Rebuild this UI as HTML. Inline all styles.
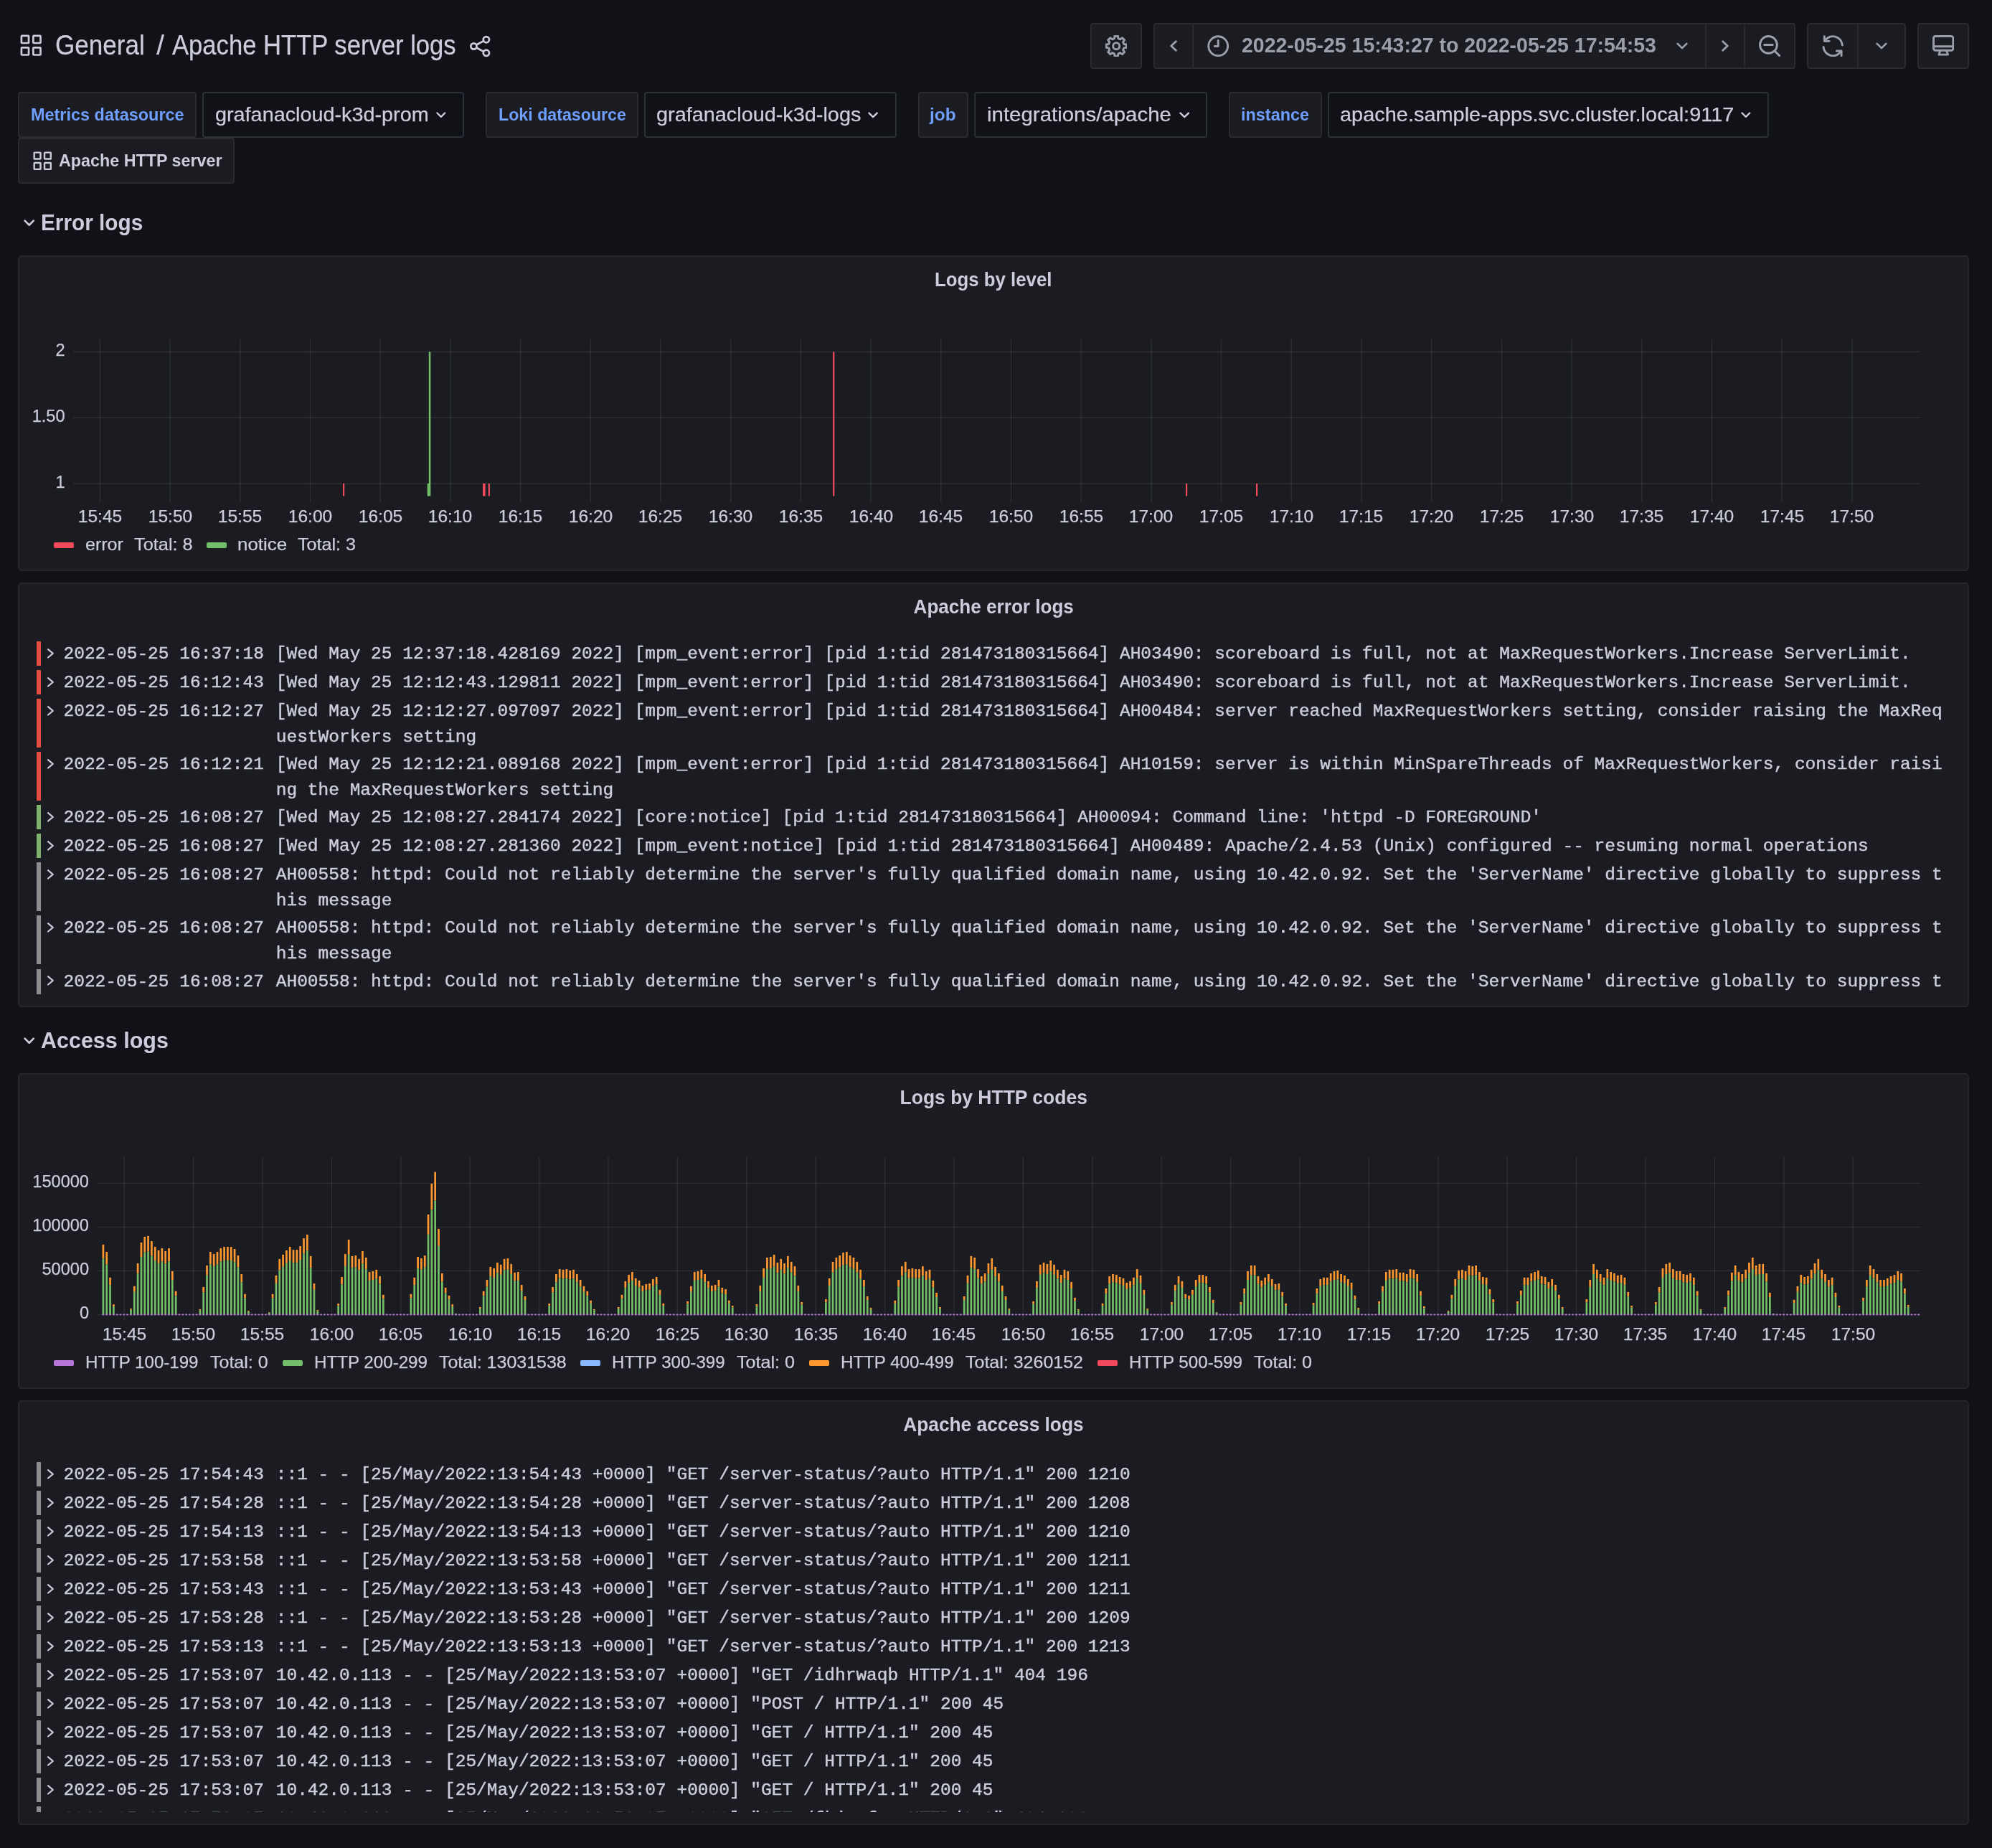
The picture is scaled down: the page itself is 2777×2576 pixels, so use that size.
<!DOCTYPE html>
<html lang="en"><head><meta charset="utf-8"><title>Apache HTTP server logs - Grafana</title>
<style>
html,body{margin:0;padding:0}
body{width:2777px;height:2576px;background:#111217;position:relative;overflow:hidden;font-family:"Liberation Sans", sans-serif;color:rgb(204,204,220)}
#root{position:absolute;left:0;top:0;width:2777px;height:2576px;will-change:transform}
.t{position:absolute;white-space:pre;margin:0;padding:0;-webkit-text-stroke:0.25px currentColor}
.m{font-family:"Liberation Mono", monospace;-webkit-text-stroke:0.45px currentColor}
.b{position:absolute;box-sizing:border-box;display:block}
.clip{position:absolute;left:0;width:2777px;overflow:hidden}
</style></head>
<body>
<div id="root">
<svg class="b" style="left:27.70px;top:48.20px;" width="30.40" height="30.40" viewBox="0 0 24 24"><g fill="none" stroke="rgb(204,204,220)" stroke-width="2.1" stroke-linejoin="miter"><rect x="1.5" y="1.5" width="8" height="8" rx="0.6"/><rect x="1.5" y="14.5" width="8" height="8" rx="0.6"/><rect x="14.5" y="1.5" width="8" height="8" rx="0.6"/><rect x="14.5" y="14.5" width="8" height="8" rx="0.6"/></g></svg>
<span class="t" style="top:43.96px;font-size:38.20px;line-height:38.20px;color:rgb(204,204,220);left:76.77px;transform:scaleX(0.9182);transform-origin:0 50%;">General</span>
<span class="t" style="top:43.96px;font-size:38.20px;line-height:38.20px;color:rgb(204,204,220);left:218.30px;">/</span>
<span class="t" style="top:43.96px;font-size:38.20px;line-height:38.20px;color:rgb(204,204,220);left:240.07px;transform:scaleX(0.9064);transform-origin:0 50%;">Apache HTTP server logs</span>
<svg class="b" style="left:653.50px;top:48.60px;" width="31.00" height="31.00" viewBox="0 0 24 24"><g fill="none" stroke="rgb(204,204,220)" stroke-width="2.1" stroke-linecap="round" stroke-linejoin="round"><circle cx="18.5" cy="4.8" r="3.2"/><circle cx="5" cy="12" r="3.2"/><circle cx="18.5" cy="19.2" r="3.2"/><path d="M7.9 10.5 L15.6 6.3 M7.9 13.5 L15.6 17.7"/></g></svg>
<div class="b" style="left:1520.00px;top:32.00px;width:72.00px;height:64.00px;background:#1a1c21;border-radius:4px;border:2px solid #292b31;"></div>
<svg class="b" style="left:1540.70px;top:48.90px;" width="30.40" height="30.40" viewBox="0 0 24 24"><g fill="none" stroke="rgb(157,158,171)" stroke-width="2.3" stroke-linecap="round" stroke-linejoin="round"><path d="M10.25 0.94 L13.75 0.94 L14.14 3.67 L16.38 4.60 L18.58 2.94 L21.06 5.42 L19.40 7.62 L20.33 9.86 L23.06 10.25 L23.06 13.75 L20.33 14.14 L19.40 16.38 L21.06 18.58 L18.58 21.06 L16.38 19.40 L14.14 20.33 L13.75 23.06 L10.25 23.06 L9.86 20.33 L7.62 19.40 L5.42 21.06 L2.94 18.58 L4.60 16.38 L3.67 14.14 L0.94 13.75 L0.94 10.25 L3.67 9.86 L4.60 7.62 L2.94 5.42 L5.42 2.94 L7.62 4.60 L9.86 3.67 Z"/><circle cx="12" cy="12" r="3.6"/></g></svg>
<div class="b" style="left:1608.00px;top:32.00px;width:895.00px;height:64.00px;background:#1a1c21;border-radius:4px;border:2px solid #292b31;"></div>
<div class="b" style="left:1662.00px;top:34.00px;width:2.00px;height:60.00px;background:#292b31;border-radius:0px;"></div>
<div class="b" style="left:2377.00px;top:34.00px;width:2.00px;height:60.00px;background:#292b31;border-radius:0px;"></div>
<div class="b" style="left:2431.00px;top:34.00px;width:2.00px;height:60.00px;background:#292b31;border-radius:0px;"></div>
<svg class="b" style="left:1630.00px;top:55.00px;" width="12.00" height="18.00" viewBox="0 0 9 16"><g fill="none" stroke="rgb(157,158,171)" stroke-width="2.6" stroke-linecap="round" stroke-linejoin="round"><path d="M7.5 2.4 L1.6 8 L7.5 13.6"/></g></svg>
<svg class="b" style="left:1682.80px;top:48.80px;" width="30.40" height="30.40" viewBox="0 0 24 24"><g fill="none" stroke="rgb(157,158,171)" stroke-width="2.3" stroke-linecap="round" stroke-linejoin="round"><circle cx="12" cy="12" r="10.6"/><path d="M12 5.8 V12.2 H8.2"/></g></svg>
<span class="t" style="top:48.20px;font-size:30.00px;line-height:30.00px;color:rgb(157,158,171);font-weight:700;-webkit-text-stroke:0;left:1730.80px;transform:scaleX(0.9492);transform-origin:0 50%;">2022-05-25 15:43:27 to 2022-05-25 17:54:53</span>
<svg class="b" style="left:2337.00px;top:59.20px;" width="16.00" height="10.00" viewBox="0 0 14 8.5"><g fill="none" stroke="rgb(157,158,171)" stroke-width="2.4" stroke-linecap="round" stroke-linejoin="round"><path d="M1.5 1.5 L7 7 L12.5 1.5"/></g></svg>
<svg class="b" style="left:2399.30px;top:55.00px;" width="12.00" height="18.00" viewBox="0 0 9 16"><g fill="none" stroke="rgb(157,158,171)" stroke-width="2.6" stroke-linecap="round" stroke-linejoin="round"><path d="M1.5 2.4 L7.4 8 L1.5 13.6"/></g></svg>
<svg class="b" style="left:2451.80px;top:48.60px;" width="30.40" height="30.40" viewBox="0 0 24 24"><g fill="none" stroke="rgb(157,158,171)" stroke-width="2.3" stroke-linecap="round" stroke-linejoin="round"><circle cx="10.6" cy="10.6" r="9.4"/><path d="M6 10.6 H15.2 M17.6 17.6 L22.6 22.6"/></g></svg>
<div class="b" style="left:2519.00px;top:32.00px;width:138.00px;height:64.00px;background:#1a1c21;border-radius:4px;border:2px solid #292b31;"></div>
<div class="b" style="left:2589.00px;top:34.00px;width:2.00px;height:60.00px;background:#292b31;border-radius:0px;"></div>
<svg class="b" style="left:2539.80px;top:48.80px;" width="30.40" height="30.40" viewBox="0 0 24 24"><g fill="none" stroke="rgb(157,158,171)" stroke-width="2.3" stroke-linecap="round" stroke-linejoin="round"><path d="M2.6 1.4 V6.6 H8"/><path d="M3.2 6.2 A10.4 10.4 0 0 1 22.4 11"/><path d="M21.4 22.6 V17.4 H16"/><path d="M20.8 17.8 A10.4 10.4 0 0 1 1.6 13"/></g></svg>
<svg class="b" style="left:2615.30px;top:59.20px;" width="16.00" height="10.00" viewBox="0 0 14 8.5"><g fill="none" stroke="rgb(157,158,171)" stroke-width="2.4" stroke-linecap="round" stroke-linejoin="round"><path d="M1.5 1.5 L7 7 L12.5 1.5"/></g></svg>
<div class="b" style="left:2673.00px;top:32.00px;width:72.00px;height:64.00px;background:#1a1c21;border-radius:4px;border:2px solid #292b31;"></div>
<svg class="b" style="left:2693.80px;top:48.80px;" width="30.40" height="30.40" viewBox="0 0 24 24"><g fill="none" stroke="rgb(157,158,171)" stroke-width="2.3" stroke-linecap="round" stroke-linejoin="round"><rect x="1.2" y="1.2" width="21.6" height="15.6" rx="2.2"/><path d="M1.2 12.4 H22.8"/><path d="M8.6 17 L7 21.4 H17 L15.4 17"/></g></svg>
<div class="b" style="left:25.00px;top:128.00px;width:249.00px;height:64.00px;background:#1a1c21;border-radius:4px;border:2px solid #292b31;"></div>
<span class="t" style="top:148.62px;font-size:23.60px;line-height:23.60px;color:#6e9fff;font-weight:700;-webkit-text-stroke:0;left:42.86px;transform:scaleX(0.9932);transform-origin:0 50%;">Metrics datasource</span>
<div class="b" style="left:282.00px;top:128.00px;width:365.00px;height:64.00px;background:#111217;border-radius:4px;border:2px solid #2e3038;"></div>
<span class="t" style="top:146.01px;font-size:27.40px;line-height:27.40px;color:rgb(204,204,220);left:299.50px;transform:scaleX(1.0513);transform-origin:0 50%;">grafanacloud-k3d-prom</span>
<svg class="b" style="left:608.40px;top:156.00px;" width="13.70" height="8.32" viewBox="0 0 14 8.5"><g fill="none" stroke="rgb(204,204,220)" stroke-width="2.4" stroke-linecap="round" stroke-linejoin="round"><path d="M1.5 1.5 L7 7 L12.5 1.5"/></g></svg>
<div class="b" style="left:677.00px;top:128.00px;width:213.00px;height:64.00px;background:#1a1c21;border-radius:4px;border:2px solid #292b31;"></div>
<span class="t" style="top:148.62px;font-size:23.60px;line-height:23.60px;color:#6e9fff;font-weight:700;-webkit-text-stroke:0;left:694.56px;transform:scaleX(0.9832);transform-origin:0 50%;">Loki datasource</span>
<div class="b" style="left:898.00px;top:128.00px;width:352.00px;height:64.00px;background:#111217;border-radius:4px;border:2px solid #2e3038;"></div>
<span class="t" style="top:146.01px;font-size:27.40px;line-height:27.40px;color:rgb(204,204,220);left:914.90px;transform:scaleX(1.0528);transform-origin:0 50%;">grafanacloud-k3d-logs</span>
<svg class="b" style="left:1210.40px;top:156.00px;" width="14.20" height="8.62" viewBox="0 0 14 8.5"><g fill="none" stroke="rgb(204,204,220)" stroke-width="2.4" stroke-linecap="round" stroke-linejoin="round"><path d="M1.5 1.5 L7 7 L12.5 1.5"/></g></svg>
<div class="b" style="left:1280.00px;top:128.00px;width:70.00px;height:64.00px;background:#1a1c21;border-radius:4px;border:2px solid #292b31;"></div>
<span class="t" style="top:148.62px;font-size:23.60px;line-height:23.60px;color:#6e9fff;font-weight:700;-webkit-text-stroke:0;left:1296.06px;transform:scaleX(1.0343);transform-origin:0 50%;">job</span>
<div class="b" style="left:1358.00px;top:128.00px;width:325.00px;height:64.00px;background:#111217;border-radius:4px;border:2px solid #2e3038;"></div>
<span class="t" style="top:146.01px;font-size:27.40px;line-height:27.40px;color:rgb(204,204,220);left:1375.90px;transform:scaleX(1.0746);transform-origin:0 50%;">integrations/apache</span>
<svg class="b" style="left:1643.90px;top:156.00px;" width="14.50" height="8.80" viewBox="0 0 14 8.5"><g fill="none" stroke="rgb(204,204,220)" stroke-width="2.4" stroke-linecap="round" stroke-linejoin="round"><path d="M1.5 1.5 L7 7 L12.5 1.5"/></g></svg>
<div class="b" style="left:1713.00px;top:128.00px;width:130.00px;height:64.00px;background:#1a1c21;border-radius:4px;border:2px solid #292b31;"></div>
<span class="t" style="top:148.62px;font-size:23.60px;line-height:23.60px;color:#6e9fff;font-weight:700;-webkit-text-stroke:0;left:1730.06px;transform:scaleX(0.9924);transform-origin:0 50%;">instance</span>
<div class="b" style="left:1851.00px;top:128.00px;width:615.00px;height:64.00px;background:#111217;border-radius:4px;border:2px solid #2e3038;"></div>
<span class="t" style="top:146.01px;font-size:27.40px;line-height:27.40px;color:rgb(204,204,220);left:1867.60px;transform:scaleX(1.0560);transform-origin:0 50%;">apache.sample-apps.svc.cluster.local:9117</span>
<svg class="b" style="left:2427.10px;top:156.00px;" width="13.70" height="8.32" viewBox="0 0 14 8.5"><g fill="none" stroke="rgb(204,204,220)" stroke-width="2.4" stroke-linecap="round" stroke-linejoin="round"><path d="M1.5 1.5 L7 7 L12.5 1.5"/></g></svg>
<div class="b" style="left:25.00px;top:192.00px;width:302.00px;height:64.00px;background:#1a1c21;border-radius:4px;border:2px solid #292b31;"></div>
<svg class="b" style="left:45.80px;top:210.70px;" width="26.50" height="26.50" viewBox="0 0 24 24"><g fill="none" stroke="rgb(204,204,220)" stroke-width="2.2" stroke-linejoin="miter"><rect x="1.5" y="1.5" width="8" height="8" rx="0.6"/><rect x="1.5" y="14.5" width="8" height="8" rx="0.6"/><rect x="14.5" y="1.5" width="8" height="8" rx="0.6"/><rect x="14.5" y="14.5" width="8" height="8" rx="0.6"/></g></svg>
<span class="t" style="top:212.82px;font-size:23.60px;line-height:23.60px;color:rgb(204,204,220);font-weight:700;-webkit-text-stroke:0;left:82.36px;transform:scaleX(0.9875);transform-origin:0 50%;">Apache HTTP server</span>
<svg class="b" style="left:33.10px;top:306.20px;" width="15.40" height="9.35" viewBox="0 0 14 8.5"><g fill="none" stroke="rgb(204,204,220)" stroke-width="2.4" stroke-linecap="round" stroke-linejoin="round"><path d="M1.5 1.5 L7 7 L12.5 1.5"/></g></svg>
<span class="t" style="top:294.95px;font-size:31.60px;line-height:31.60px;color:rgb(204,204,220);font-weight:700;-webkit-text-stroke:0;left:56.94px;transform:scaleX(0.9424);transform-origin:0 50%;">Error logs</span>
<svg class="b" style="left:33.10px;top:1446.40px;" width="15.40" height="9.35" viewBox="0 0 14 8.5"><g fill="none" stroke="rgb(204,204,220)" stroke-width="2.4" stroke-linecap="round" stroke-linejoin="round"><path d="M1.5 1.5 L7 7 L12.5 1.5"/></g></svg>
<span class="t" style="top:1435.15px;font-size:31.60px;line-height:31.60px;color:rgb(204,204,220);font-weight:700;-webkit-text-stroke:0;left:56.94px;transform:scaleX(0.9646);transform-origin:0 50%;">Access logs</span>
<div class="b" style="left:25.00px;top:356.00px;width:2720.00px;height:440.00px;background:#1a1c21;border-radius:5px;border:2px solid #25272c;"></div>
<div class="t" style="top:375.61px;font-size:27.40px;line-height:27.40px;color:rgb(204,204,220);font-weight:700;-webkit-text-stroke:0;left:1385.00px;width:0;display:flex;justify-content:center;"><span style="display:block;transform:scaleX(0.9411);transform-origin:50% 50%;">Logs by level</span></div>
<div class="b" style="left:25.00px;top:812.00px;width:2720.00px;height:592.00px;background:#1a1c21;border-radius:5px;border:2px solid #25272c;"></div>
<div class="t" style="top:831.61px;font-size:27.40px;line-height:27.40px;color:rgb(204,204,220);font-weight:700;-webkit-text-stroke:0;left:1385.00px;width:0;display:flex;justify-content:center;"><span style="display:block;transform:scaleX(0.9527);transform-origin:50% 50%;">Apache error logs</span></div>
<div class="b" style="left:25.00px;top:1496.00px;width:2720.00px;height:440.00px;background:#1a1c21;border-radius:5px;border:2px solid #25272c;"></div>
<div class="t" style="top:1515.61px;font-size:27.40px;line-height:27.40px;color:rgb(204,204,220);font-weight:700;-webkit-text-stroke:0;left:1385.00px;width:0;display:flex;justify-content:center;"><span style="display:block;transform:scaleX(0.9664);transform-origin:50% 50%;">Logs by HTTP codes</span></div>
<div class="b" style="left:25.00px;top:1952.00px;width:2720.00px;height:592.00px;background:#1a1c21;border-radius:5px;border:2px solid #25272c;"></div>
<div class="t" style="top:1971.61px;font-size:27.40px;line-height:27.40px;color:rgb(204,204,220);font-weight:700;-webkit-text-stroke:0;left:1385.00px;width:0;display:flex;justify-content:center;"><span style="display:block;transform:scaleX(0.9597);transform-origin:50% 50%;">Apache access logs</span></div>
<svg class="b" style="left:0.00px;top:440.00px;" width="2777.00" height="300.00" viewBox="0 440 2777 300"><rect x="101.90" y="489.70" width="2575.60" height="1.40" fill="rgba(204,204,220,0.11)"/><rect x="101.90" y="581.50" width="2575.60" height="1.40" fill="rgba(204,204,220,0.11)"/><rect x="101.90" y="673.50" width="2575.60" height="1.40" fill="rgba(204,204,220,0.11)"/><rect x="138.70" y="472.80" width="1.40" height="227.20" fill="rgba(204,204,220,0.11)"/><rect x="236.40" y="472.80" width="1.40" height="227.20" fill="rgba(204,204,220,0.11)"/><rect x="334.10" y="472.80" width="1.40" height="227.20" fill="rgba(204,204,220,0.11)"/><rect x="431.80" y="472.80" width="1.40" height="227.20" fill="rgba(204,204,220,0.11)"/><rect x="529.50" y="472.80" width="1.40" height="227.20" fill="rgba(204,204,220,0.11)"/><rect x="627.20" y="472.80" width="1.40" height="227.20" fill="rgba(204,204,220,0.11)"/><rect x="724.90" y="472.80" width="1.40" height="227.20" fill="rgba(204,204,220,0.11)"/><rect x="822.60" y="472.80" width="1.40" height="227.20" fill="rgba(204,204,220,0.11)"/><rect x="920.30" y="472.80" width="1.40" height="227.20" fill="rgba(204,204,220,0.11)"/><rect x="1018.00" y="472.80" width="1.40" height="227.20" fill="rgba(204,204,220,0.11)"/><rect x="1115.70" y="472.80" width="1.40" height="227.20" fill="rgba(204,204,220,0.11)"/><rect x="1213.40" y="472.80" width="1.40" height="227.20" fill="rgba(204,204,220,0.11)"/><rect x="1311.10" y="472.80" width="1.40" height="227.20" fill="rgba(204,204,220,0.11)"/><rect x="1408.80" y="472.80" width="1.40" height="227.20" fill="rgba(204,204,220,0.11)"/><rect x="1506.50" y="472.80" width="1.40" height="227.20" fill="rgba(204,204,220,0.11)"/><rect x="1604.20" y="472.80" width="1.40" height="227.20" fill="rgba(204,204,220,0.11)"/><rect x="1701.90" y="472.80" width="1.40" height="227.20" fill="rgba(204,204,220,0.11)"/><rect x="1799.60" y="472.80" width="1.40" height="227.20" fill="rgba(204,204,220,0.11)"/><rect x="1897.30" y="472.80" width="1.40" height="227.20" fill="rgba(204,204,220,0.11)"/><rect x="1995.00" y="472.80" width="1.40" height="227.20" fill="rgba(204,204,220,0.11)"/><rect x="2092.70" y="472.80" width="1.40" height="227.20" fill="rgba(204,204,220,0.11)"/><rect x="2190.40" y="472.80" width="1.40" height="227.20" fill="rgba(204,204,220,0.11)"/><rect x="2288.10" y="472.80" width="1.40" height="227.20" fill="rgba(204,204,220,0.11)"/><rect x="2385.80" y="472.80" width="1.40" height="227.20" fill="rgba(204,204,220,0.11)"/><rect x="2483.50" y="472.80" width="1.40" height="227.20" fill="rgba(204,204,220,0.11)"/><rect x="2581.20" y="472.80" width="1.40" height="227.20" fill="rgba(204,204,220,0.11)"/><rect x="478.00" y="674.00" width="2.20" height="17.50" fill="#F2495C"/><rect x="595.70" y="674.00" width="2.30" height="17.50" fill="#73BF69"/><rect x="597.80" y="490.40" width="2.50" height="201.10" fill="#73BF69"/><rect x="673.00" y="674.00" width="3.60" height="17.50" fill="#F2495C"/><rect x="680.70" y="674.00" width="2.20" height="17.50" fill="#F2495C"/><rect x="1161.10" y="490.40" width="2.20" height="201.10" fill="#F2495C"/><rect x="1653.00" y="674.00" width="2.20" height="17.50" fill="#F2495C"/><rect x="1751.00" y="674.00" width="2.20" height="17.50" fill="#F2495C"/></svg>
<span class="t" style="top:476.82px;font-size:23.60px;line-height:23.60px;color:rgb(204,204,220);right:2686.40px;text-align:right;">2</span>
<span class="t" style="top:568.62px;font-size:23.60px;line-height:23.60px;color:rgb(204,204,220);right:2686.40px;text-align:right;">1.50</span>
<span class="t" style="top:660.62px;font-size:23.60px;line-height:23.60px;color:rgb(204,204,220);right:2686.40px;text-align:right;">1</span>
<div class="t" style="top:709.02px;font-size:23.60px;line-height:23.60px;color:rgb(204,204,220);left:139.40px;width:0;display:flex;justify-content:center;"><span style="display:block;transform:scaleX(1.0416);transform-origin:50% 50%;">15:45</span></div>
<div class="t" style="top:709.02px;font-size:23.60px;line-height:23.60px;color:rgb(204,204,220);left:237.10px;width:0;display:flex;justify-content:center;"><span style="display:block;transform:scaleX(1.0416);transform-origin:50% 50%;">15:50</span></div>
<div class="t" style="top:709.02px;font-size:23.60px;line-height:23.60px;color:rgb(204,204,220);left:334.80px;width:0;display:flex;justify-content:center;"><span style="display:block;transform:scaleX(1.0416);transform-origin:50% 50%;">15:55</span></div>
<div class="t" style="top:709.02px;font-size:23.60px;line-height:23.60px;color:rgb(204,204,220);left:432.50px;width:0;display:flex;justify-content:center;"><span style="display:block;transform:scaleX(1.0416);transform-origin:50% 50%;">16:00</span></div>
<div class="t" style="top:709.02px;font-size:23.60px;line-height:23.60px;color:rgb(204,204,220);left:530.20px;width:0;display:flex;justify-content:center;"><span style="display:block;transform:scaleX(1.0416);transform-origin:50% 50%;">16:05</span></div>
<div class="t" style="top:709.02px;font-size:23.60px;line-height:23.60px;color:rgb(204,204,220);left:627.90px;width:0;display:flex;justify-content:center;"><span style="display:block;transform:scaleX(1.0416);transform-origin:50% 50%;">16:10</span></div>
<div class="t" style="top:709.02px;font-size:23.60px;line-height:23.60px;color:rgb(204,204,220);left:725.60px;width:0;display:flex;justify-content:center;"><span style="display:block;transform:scaleX(1.0416);transform-origin:50% 50%;">16:15</span></div>
<div class="t" style="top:709.02px;font-size:23.60px;line-height:23.60px;color:rgb(204,204,220);left:823.30px;width:0;display:flex;justify-content:center;"><span style="display:block;transform:scaleX(1.0416);transform-origin:50% 50%;">16:20</span></div>
<div class="t" style="top:709.02px;font-size:23.60px;line-height:23.60px;color:rgb(204,204,220);left:921.00px;width:0;display:flex;justify-content:center;"><span style="display:block;transform:scaleX(1.0416);transform-origin:50% 50%;">16:25</span></div>
<div class="t" style="top:709.02px;font-size:23.60px;line-height:23.60px;color:rgb(204,204,220);left:1018.70px;width:0;display:flex;justify-content:center;"><span style="display:block;transform:scaleX(1.0416);transform-origin:50% 50%;">16:30</span></div>
<div class="t" style="top:709.02px;font-size:23.60px;line-height:23.60px;color:rgb(204,204,220);left:1116.40px;width:0;display:flex;justify-content:center;"><span style="display:block;transform:scaleX(1.0416);transform-origin:50% 50%;">16:35</span></div>
<div class="t" style="top:709.02px;font-size:23.60px;line-height:23.60px;color:rgb(204,204,220);left:1214.10px;width:0;display:flex;justify-content:center;"><span style="display:block;transform:scaleX(1.0416);transform-origin:50% 50%;">16:40</span></div>
<div class="t" style="top:709.02px;font-size:23.60px;line-height:23.60px;color:rgb(204,204,220);left:1311.80px;width:0;display:flex;justify-content:center;"><span style="display:block;transform:scaleX(1.0416);transform-origin:50% 50%;">16:45</span></div>
<div class="t" style="top:709.02px;font-size:23.60px;line-height:23.60px;color:rgb(204,204,220);left:1409.50px;width:0;display:flex;justify-content:center;"><span style="display:block;transform:scaleX(1.0416);transform-origin:50% 50%;">16:50</span></div>
<div class="t" style="top:709.02px;font-size:23.60px;line-height:23.60px;color:rgb(204,204,220);left:1507.20px;width:0;display:flex;justify-content:center;"><span style="display:block;transform:scaleX(1.0416);transform-origin:50% 50%;">16:55</span></div>
<div class="t" style="top:709.02px;font-size:23.60px;line-height:23.60px;color:rgb(204,204,220);left:1604.90px;width:0;display:flex;justify-content:center;"><span style="display:block;transform:scaleX(1.0416);transform-origin:50% 50%;">17:00</span></div>
<div class="t" style="top:709.02px;font-size:23.60px;line-height:23.60px;color:rgb(204,204,220);left:1702.60px;width:0;display:flex;justify-content:center;"><span style="display:block;transform:scaleX(1.0416);transform-origin:50% 50%;">17:05</span></div>
<div class="t" style="top:709.02px;font-size:23.60px;line-height:23.60px;color:rgb(204,204,220);left:1800.30px;width:0;display:flex;justify-content:center;"><span style="display:block;transform:scaleX(1.0416);transform-origin:50% 50%;">17:10</span></div>
<div class="t" style="top:709.02px;font-size:23.60px;line-height:23.60px;color:rgb(204,204,220);left:1898.00px;width:0;display:flex;justify-content:center;"><span style="display:block;transform:scaleX(1.0416);transform-origin:50% 50%;">17:15</span></div>
<div class="t" style="top:709.02px;font-size:23.60px;line-height:23.60px;color:rgb(204,204,220);left:1995.70px;width:0;display:flex;justify-content:center;"><span style="display:block;transform:scaleX(1.0416);transform-origin:50% 50%;">17:20</span></div>
<div class="t" style="top:709.02px;font-size:23.60px;line-height:23.60px;color:rgb(204,204,220);left:2093.40px;width:0;display:flex;justify-content:center;"><span style="display:block;transform:scaleX(1.0416);transform-origin:50% 50%;">17:25</span></div>
<div class="t" style="top:709.02px;font-size:23.60px;line-height:23.60px;color:rgb(204,204,220);left:2191.10px;width:0;display:flex;justify-content:center;"><span style="display:block;transform:scaleX(1.0416);transform-origin:50% 50%;">17:30</span></div>
<div class="t" style="top:709.02px;font-size:23.60px;line-height:23.60px;color:rgb(204,204,220);left:2288.80px;width:0;display:flex;justify-content:center;"><span style="display:block;transform:scaleX(1.0416);transform-origin:50% 50%;">17:35</span></div>
<div class="t" style="top:709.02px;font-size:23.60px;line-height:23.60px;color:rgb(204,204,220);left:2386.50px;width:0;display:flex;justify-content:center;"><span style="display:block;transform:scaleX(1.0416);transform-origin:50% 50%;">17:40</span></div>
<div class="t" style="top:709.02px;font-size:23.60px;line-height:23.60px;color:rgb(204,204,220);left:2484.20px;width:0;display:flex;justify-content:center;"><span style="display:block;transform:scaleX(1.0416);transform-origin:50% 50%;">17:45</span></div>
<div class="t" style="top:709.02px;font-size:23.60px;line-height:23.60px;color:rgb(204,204,220);left:2581.90px;width:0;display:flex;justify-content:center;"><span style="display:block;transform:scaleX(1.0416);transform-origin:50% 50%;">17:50</span></div>
<div class="b" style="left:74.80px;top:756.20px;width:28.10px;height:7.80px;background:#F2495C;border-radius:2px;"></div>
<span class="t" style="top:747.62px;font-size:23.60px;line-height:23.60px;color:rgb(204,204,220);left:118.56px;transform:scaleX(1.0618);transform-origin:0 50%;">error</span>
<span class="t" style="top:747.62px;font-size:23.60px;line-height:23.60px;color:rgb(204,204,220);left:187.06px;transform:scaleX(1.0740);transform-origin:0 50%;">Total: 8</span>
<div class="b" style="left:288.00px;top:756.20px;width:28.10px;height:7.80px;background:#73BF69;border-radius:2px;"></div>
<span class="t" style="top:747.62px;font-size:23.60px;line-height:23.60px;color:rgb(204,204,220);left:331.46px;transform:scaleX(1.0975);transform-origin:0 50%;">notice</span>
<span class="t" style="top:747.62px;font-size:23.60px;line-height:23.60px;color:rgb(204,204,220);left:415.46px;transform:scaleX(1.0648);transform-origin:0 50%;">Total: 3</span>
<svg class="b" style="left:0.00px;top:1600.00px;" width="2777.00" height="250.00" viewBox="0 1600 2777 250"><rect x="135.30" y="1648.80" width="2542.20" height="1.40" fill="rgba(204,204,220,0.11)"/><rect x="135.30" y="1709.80" width="2542.20" height="1.40" fill="rgba(204,204,220,0.11)"/><rect x="135.30" y="1770.70" width="2542.20" height="1.40" fill="rgba(204,204,220,0.11)"/><rect x="135.30" y="1831.80" width="2542.20" height="1.40" fill="rgba(204,204,220,0.11)"/><rect x="172.50" y="1612.80" width="1.40" height="227.20" fill="rgba(204,204,220,0.11)"/><rect x="268.90" y="1612.80" width="1.40" height="227.20" fill="rgba(204,204,220,0.11)"/><rect x="365.30" y="1612.80" width="1.40" height="227.20" fill="rgba(204,204,220,0.11)"/><rect x="461.70" y="1612.80" width="1.40" height="227.20" fill="rgba(204,204,220,0.11)"/><rect x="558.10" y="1612.80" width="1.40" height="227.20" fill="rgba(204,204,220,0.11)"/><rect x="654.50" y="1612.80" width="1.40" height="227.20" fill="rgba(204,204,220,0.11)"/><rect x="750.90" y="1612.80" width="1.40" height="227.20" fill="rgba(204,204,220,0.11)"/><rect x="847.30" y="1612.80" width="1.40" height="227.20" fill="rgba(204,204,220,0.11)"/><rect x="943.70" y="1612.80" width="1.40" height="227.20" fill="rgba(204,204,220,0.11)"/><rect x="1040.10" y="1612.80" width="1.40" height="227.20" fill="rgba(204,204,220,0.11)"/><rect x="1136.50" y="1612.80" width="1.40" height="227.20" fill="rgba(204,204,220,0.11)"/><rect x="1232.90" y="1612.80" width="1.40" height="227.20" fill="rgba(204,204,220,0.11)"/><rect x="1329.30" y="1612.80" width="1.40" height="227.20" fill="rgba(204,204,220,0.11)"/><rect x="1425.70" y="1612.80" width="1.40" height="227.20" fill="rgba(204,204,220,0.11)"/><rect x="1522.10" y="1612.80" width="1.40" height="227.20" fill="rgba(204,204,220,0.11)"/><rect x="1618.50" y="1612.80" width="1.40" height="227.20" fill="rgba(204,204,220,0.11)"/><rect x="1714.90" y="1612.80" width="1.40" height="227.20" fill="rgba(204,204,220,0.11)"/><rect x="1811.30" y="1612.80" width="1.40" height="227.20" fill="rgba(204,204,220,0.11)"/><rect x="1907.70" y="1612.80" width="1.40" height="227.20" fill="rgba(204,204,220,0.11)"/><rect x="2004.10" y="1612.80" width="1.40" height="227.20" fill="rgba(204,204,220,0.11)"/><rect x="2100.50" y="1612.80" width="1.40" height="227.20" fill="rgba(204,204,220,0.11)"/><rect x="2196.90" y="1612.80" width="1.40" height="227.20" fill="rgba(204,204,220,0.11)"/><rect x="2293.30" y="1612.80" width="1.40" height="227.20" fill="rgba(204,204,220,0.11)"/><rect x="2389.70" y="1612.80" width="1.40" height="227.20" fill="rgba(204,204,220,0.11)"/><rect x="2486.10" y="1612.80" width="1.40" height="227.20" fill="rgba(204,204,220,0.11)"/><rect x="2582.50" y="1612.80" width="1.40" height="227.20" fill="rgba(204,204,220,0.11)"/><rect x="142.55" y="1734.88" width="2.70" height="19.52" fill="#FF9830"/><rect x="142.55" y="1754.41" width="2.70" height="78.09" fill="#73BF69"/><rect x="142.55" y="1831.60" width="2.70" height="1.80" fill="#B877D9"/><rect x="147.37" y="1745.00" width="2.70" height="17.50" fill="#FF9830"/><rect x="147.37" y="1762.50" width="2.70" height="70.00" fill="#73BF69"/><rect x="147.37" y="1831.60" width="2.70" height="1.80" fill="#B877D9"/><rect x="152.19" y="1780.84" width="2.70" height="10.33" fill="#FF9830"/><rect x="152.19" y="1791.18" width="2.70" height="41.32" fill="#73BF69"/><rect x="152.19" y="1831.60" width="2.70" height="1.80" fill="#B877D9"/><rect x="157.01" y="1818.16" width="2.70" height="2.87" fill="#FF9830"/><rect x="157.01" y="1821.03" width="2.70" height="11.47" fill="#73BF69"/><rect x="157.01" y="1831.60" width="2.70" height="1.80" fill="#B877D9"/><rect x="161.83" y="1831.60" width="2.70" height="1.80" fill="#B877D9"/><rect x="166.65" y="1831.60" width="2.70" height="1.80" fill="#B877D9"/><rect x="171.47" y="1831.60" width="2.70" height="1.80" fill="#B877D9"/><rect x="176.29" y="1831.60" width="2.70" height="1.80" fill="#B877D9"/><rect x="181.11" y="1824.07" width="2.70" height="1.69" fill="#FF9830"/><rect x="181.11" y="1825.75" width="2.70" height="6.75" fill="#73BF69"/><rect x="181.11" y="1831.60" width="2.70" height="1.80" fill="#B877D9"/><rect x="185.93" y="1792.86" width="2.70" height="7.93" fill="#FF9830"/><rect x="185.93" y="1800.79" width="2.70" height="31.71" fill="#73BF69"/><rect x="185.93" y="1831.60" width="2.70" height="1.80" fill="#B877D9"/><rect x="190.76" y="1761.03" width="2.70" height="14.29" fill="#FF9830"/><rect x="190.76" y="1775.32" width="2.70" height="57.18" fill="#73BF69"/><rect x="190.76" y="1831.60" width="2.70" height="1.80" fill="#B877D9"/><rect x="195.58" y="1731.93" width="2.70" height="20.11" fill="#FF9830"/><rect x="195.58" y="1752.04" width="2.70" height="80.46" fill="#73BF69"/><rect x="195.58" y="1831.60" width="2.70" height="1.80" fill="#B877D9"/><rect x="200.40" y="1723.92" width="2.70" height="21.72" fill="#FF9830"/><rect x="200.40" y="1745.64" width="2.70" height="86.86" fill="#73BF69"/><rect x="200.40" y="1831.60" width="2.70" height="1.80" fill="#B877D9"/><rect x="205.22" y="1722.86" width="2.70" height="21.93" fill="#FF9830"/><rect x="205.22" y="1744.79" width="2.70" height="87.71" fill="#73BF69"/><rect x="205.22" y="1831.60" width="2.70" height="1.80" fill="#B877D9"/><rect x="210.04" y="1730.03" width="2.70" height="20.49" fill="#FF9830"/><rect x="210.04" y="1750.53" width="2.70" height="81.97" fill="#73BF69"/><rect x="210.04" y="1831.60" width="2.70" height="1.80" fill="#B877D9"/><rect x="214.86" y="1738.05" width="2.70" height="18.89" fill="#FF9830"/><rect x="214.86" y="1756.94" width="2.70" height="75.56" fill="#73BF69"/><rect x="214.86" y="1831.60" width="2.70" height="1.80" fill="#B877D9"/><rect x="219.68" y="1742.89" width="2.70" height="17.92" fill="#FF9830"/><rect x="219.68" y="1760.82" width="2.70" height="71.68" fill="#73BF69"/><rect x="219.68" y="1831.60" width="2.70" height="1.80" fill="#B877D9"/><rect x="224.50" y="1739.94" width="2.70" height="18.51" fill="#FF9830"/><rect x="224.50" y="1758.45" width="2.70" height="74.05" fill="#73BF69"/><rect x="224.50" y="1831.60" width="2.70" height="1.80" fill="#B877D9"/><rect x="229.32" y="1743.95" width="2.70" height="17.71" fill="#FF9830"/><rect x="229.32" y="1761.66" width="2.70" height="70.84" fill="#73BF69"/><rect x="229.32" y="1831.60" width="2.70" height="1.80" fill="#B877D9"/><rect x="234.14" y="1739.94" width="2.70" height="18.51" fill="#FF9830"/><rect x="234.14" y="1758.45" width="2.70" height="74.05" fill="#73BF69"/><rect x="234.14" y="1831.60" width="2.70" height="1.80" fill="#B877D9"/><rect x="238.96" y="1771.99" width="2.70" height="12.10" fill="#FF9830"/><rect x="238.96" y="1784.09" width="2.70" height="48.41" fill="#73BF69"/><rect x="238.96" y="1831.60" width="2.70" height="1.80" fill="#B877D9"/><rect x="243.78" y="1799.82" width="2.70" height="6.54" fill="#FF9830"/><rect x="243.78" y="1806.36" width="2.70" height="26.14" fill="#73BF69"/><rect x="243.78" y="1831.60" width="2.70" height="1.80" fill="#B877D9"/><rect x="248.60" y="1831.60" width="2.70" height="1.80" fill="#B877D9"/><rect x="253.42" y="1831.60" width="2.70" height="1.80" fill="#B877D9"/><rect x="258.24" y="1831.60" width="2.70" height="1.80" fill="#B877D9"/><rect x="263.06" y="1831.60" width="2.70" height="1.80" fill="#B877D9"/><rect x="267.88" y="1831.60" width="2.70" height="1.80" fill="#B877D9"/><rect x="272.70" y="1831.60" width="2.70" height="1.80" fill="#B877D9"/><rect x="277.52" y="1824.91" width="2.70" height="1.52" fill="#FF9830"/><rect x="277.52" y="1826.43" width="2.70" height="6.07" fill="#73BF69"/><rect x="277.52" y="1831.60" width="2.70" height="1.80" fill="#B877D9"/><rect x="282.34" y="1793.92" width="2.70" height="7.72" fill="#FF9830"/><rect x="282.34" y="1801.63" width="2.70" height="30.87" fill="#73BF69"/><rect x="282.34" y="1831.60" width="2.70" height="1.80" fill="#B877D9"/><rect x="287.16" y="1763.98" width="2.70" height="13.70" fill="#FF9830"/><rect x="287.16" y="1777.68" width="2.70" height="54.82" fill="#73BF69"/><rect x="287.16" y="1831.60" width="2.70" height="1.80" fill="#B877D9"/><rect x="291.99" y="1745.00" width="2.70" height="17.50" fill="#FF9830"/><rect x="291.99" y="1762.50" width="2.70" height="70.00" fill="#73BF69"/><rect x="291.99" y="1831.60" width="2.70" height="1.80" fill="#B877D9"/><rect x="296.81" y="1747.95" width="2.70" height="16.91" fill="#FF9830"/><rect x="296.81" y="1764.86" width="2.70" height="67.64" fill="#73BF69"/><rect x="296.81" y="1831.60" width="2.70" height="1.80" fill="#B877D9"/><rect x="301.63" y="1745.00" width="2.70" height="17.50" fill="#FF9830"/><rect x="301.63" y="1762.50" width="2.70" height="70.00" fill="#73BF69"/><rect x="301.63" y="1831.60" width="2.70" height="1.80" fill="#B877D9"/><rect x="306.45" y="1739.94" width="2.70" height="18.51" fill="#FF9830"/><rect x="306.45" y="1758.45" width="2.70" height="74.05" fill="#73BF69"/><rect x="306.45" y="1831.60" width="2.70" height="1.80" fill="#B877D9"/><rect x="311.27" y="1738.05" width="2.70" height="18.89" fill="#FF9830"/><rect x="311.27" y="1756.94" width="2.70" height="75.56" fill="#73BF69"/><rect x="311.27" y="1831.60" width="2.70" height="1.80" fill="#B877D9"/><rect x="316.09" y="1738.05" width="2.70" height="18.89" fill="#FF9830"/><rect x="316.09" y="1756.94" width="2.70" height="75.56" fill="#73BF69"/><rect x="316.09" y="1831.60" width="2.70" height="1.80" fill="#B877D9"/><rect x="320.91" y="1738.05" width="2.70" height="18.89" fill="#FF9830"/><rect x="320.91" y="1756.94" width="2.70" height="75.56" fill="#73BF69"/><rect x="320.91" y="1831.60" width="2.70" height="1.80" fill="#B877D9"/><rect x="325.73" y="1741.00" width="2.70" height="18.30" fill="#FF9830"/><rect x="325.73" y="1759.30" width="2.70" height="73.20" fill="#73BF69"/><rect x="325.73" y="1831.60" width="2.70" height="1.80" fill="#B877D9"/><rect x="330.55" y="1750.06" width="2.70" height="16.49" fill="#FF9830"/><rect x="330.55" y="1766.55" width="2.70" height="65.95" fill="#73BF69"/><rect x="330.55" y="1831.60" width="2.70" height="1.80" fill="#B877D9"/><rect x="335.37" y="1776.00" width="2.70" height="11.30" fill="#FF9830"/><rect x="335.37" y="1787.30" width="2.70" height="45.20" fill="#73BF69"/><rect x="335.37" y="1831.60" width="2.70" height="1.80" fill="#B877D9"/><rect x="340.19" y="1803.83" width="2.70" height="5.73" fill="#FF9830"/><rect x="340.19" y="1809.56" width="2.70" height="22.94" fill="#73BF69"/><rect x="340.19" y="1831.60" width="2.70" height="1.80" fill="#B877D9"/><rect x="345.01" y="1827.02" width="2.70" height="1.10" fill="#FF9830"/><rect x="345.01" y="1828.11" width="2.70" height="4.39" fill="#73BF69"/><rect x="345.01" y="1831.60" width="2.70" height="1.80" fill="#B877D9"/><rect x="349.83" y="1831.60" width="2.70" height="1.80" fill="#B877D9"/><rect x="354.65" y="1831.60" width="2.70" height="1.80" fill="#B877D9"/><rect x="359.47" y="1831.60" width="2.70" height="1.80" fill="#B877D9"/><rect x="364.29" y="1831.60" width="2.70" height="1.80" fill="#B877D9"/><rect x="369.11" y="1831.60" width="2.70" height="1.80" fill="#B877D9"/><rect x="373.93" y="1829.13" width="2.70" height="0.67" fill="#FF9830"/><rect x="373.93" y="1829.80" width="2.70" height="2.70" fill="#73BF69"/><rect x="373.93" y="1831.60" width="2.70" height="1.80" fill="#B877D9"/><rect x="378.75" y="1803.83" width="2.70" height="5.73" fill="#FF9830"/><rect x="378.75" y="1809.56" width="2.70" height="22.94" fill="#73BF69"/><rect x="378.75" y="1831.60" width="2.70" height="1.80" fill="#B877D9"/><rect x="383.57" y="1777.89" width="2.70" height="10.92" fill="#FF9830"/><rect x="383.57" y="1788.81" width="2.70" height="43.69" fill="#73BF69"/><rect x="383.57" y="1831.60" width="2.70" height="1.80" fill="#B877D9"/><rect x="388.40" y="1754.91" width="2.70" height="15.52" fill="#FF9830"/><rect x="388.40" y="1770.43" width="2.70" height="62.07" fill="#73BF69"/><rect x="388.40" y="1831.60" width="2.70" height="1.80" fill="#B877D9"/><rect x="393.22" y="1749.01" width="2.70" height="16.70" fill="#FF9830"/><rect x="393.22" y="1765.71" width="2.70" height="66.79" fill="#73BF69"/><rect x="393.22" y="1831.60" width="2.70" height="1.80" fill="#B877D9"/><rect x="398.04" y="1742.89" width="2.70" height="17.92" fill="#FF9830"/><rect x="398.04" y="1760.82" width="2.70" height="71.68" fill="#73BF69"/><rect x="398.04" y="1831.60" width="2.70" height="1.80" fill="#B877D9"/><rect x="402.86" y="1738.05" width="2.70" height="18.89" fill="#FF9830"/><rect x="402.86" y="1756.94" width="2.70" height="75.56" fill="#73BF69"/><rect x="402.86" y="1831.60" width="2.70" height="1.80" fill="#B877D9"/><rect x="407.68" y="1742.05" width="2.70" height="18.09" fill="#FF9830"/><rect x="407.68" y="1760.14" width="2.70" height="72.36" fill="#73BF69"/><rect x="407.68" y="1831.60" width="2.70" height="1.80" fill="#B877D9"/><rect x="412.50" y="1742.05" width="2.70" height="18.09" fill="#FF9830"/><rect x="412.50" y="1760.14" width="2.70" height="72.36" fill="#73BF69"/><rect x="412.50" y="1831.60" width="2.70" height="1.80" fill="#B877D9"/><rect x="417.32" y="1736.99" width="2.70" height="19.10" fill="#FF9830"/><rect x="417.32" y="1756.09" width="2.70" height="76.41" fill="#73BF69"/><rect x="417.32" y="1831.60" width="2.70" height="1.80" fill="#B877D9"/><rect x="422.14" y="1726.03" width="2.70" height="21.29" fill="#FF9830"/><rect x="422.14" y="1747.32" width="2.70" height="85.18" fill="#73BF69"/><rect x="422.14" y="1831.60" width="2.70" height="1.80" fill="#B877D9"/><rect x="426.96" y="1720.97" width="2.70" height="22.31" fill="#FF9830"/><rect x="426.96" y="1743.27" width="2.70" height="89.23" fill="#73BF69"/><rect x="426.96" y="1831.60" width="2.70" height="1.80" fill="#B877D9"/><rect x="431.78" y="1750.91" width="2.70" height="16.32" fill="#FF9830"/><rect x="431.78" y="1767.22" width="2.70" height="65.28" fill="#73BF69"/><rect x="431.78" y="1831.60" width="2.70" height="1.80" fill="#B877D9"/><rect x="436.60" y="1789.07" width="2.70" height="8.69" fill="#FF9830"/><rect x="436.60" y="1797.75" width="2.70" height="34.75" fill="#73BF69"/><rect x="436.60" y="1831.60" width="2.70" height="1.80" fill="#B877D9"/><rect x="441.42" y="1825.96" width="2.70" height="1.31" fill="#FF9830"/><rect x="441.42" y="1827.27" width="2.70" height="5.23" fill="#73BF69"/><rect x="441.42" y="1831.60" width="2.70" height="1.80" fill="#B877D9"/><rect x="446.24" y="1831.60" width="2.70" height="1.80" fill="#B877D9"/><rect x="451.06" y="1831.60" width="2.70" height="1.80" fill="#B877D9"/><rect x="455.88" y="1831.60" width="2.70" height="1.80" fill="#B877D9"/><rect x="460.70" y="1831.60" width="2.70" height="1.80" fill="#B877D9"/><rect x="465.52" y="1831.60" width="2.70" height="1.80" fill="#B877D9"/><rect x="470.34" y="1817.11" width="2.70" height="3.08" fill="#FF9830"/><rect x="470.34" y="1820.19" width="2.70" height="12.31" fill="#73BF69"/><rect x="470.34" y="1831.60" width="2.70" height="1.80" fill="#B877D9"/><rect x="475.16" y="1780.00" width="2.70" height="10.50" fill="#FF9830"/><rect x="475.16" y="1790.50" width="2.70" height="42.00" fill="#73BF69"/><rect x="475.16" y="1831.60" width="2.70" height="1.80" fill="#B877D9"/><rect x="479.99" y="1747.95" width="2.70" height="16.91" fill="#FF9830"/><rect x="479.99" y="1764.86" width="2.70" height="67.64" fill="#73BF69"/><rect x="479.99" y="1831.60" width="2.70" height="1.80" fill="#B877D9"/><rect x="484.81" y="1727.92" width="2.70" height="20.92" fill="#FF9830"/><rect x="484.81" y="1748.84" width="2.70" height="83.66" fill="#73BF69"/><rect x="484.81" y="1831.60" width="2.70" height="1.80" fill="#B877D9"/><rect x="489.63" y="1750.91" width="2.70" height="16.32" fill="#FF9830"/><rect x="489.63" y="1767.22" width="2.70" height="65.28" fill="#73BF69"/><rect x="489.63" y="1831.60" width="2.70" height="1.80" fill="#B877D9"/><rect x="494.45" y="1750.06" width="2.70" height="16.49" fill="#FF9830"/><rect x="494.45" y="1766.55" width="2.70" height="65.95" fill="#73BF69"/><rect x="494.45" y="1831.60" width="2.70" height="1.80" fill="#B877D9"/><rect x="499.27" y="1754.91" width="2.70" height="15.52" fill="#FF9830"/><rect x="499.27" y="1770.43" width="2.70" height="62.07" fill="#73BF69"/><rect x="499.27" y="1831.60" width="2.70" height="1.80" fill="#B877D9"/><rect x="504.09" y="1743.95" width="2.70" height="17.71" fill="#FF9830"/><rect x="504.09" y="1761.66" width="2.70" height="70.84" fill="#73BF69"/><rect x="504.09" y="1831.60" width="2.70" height="1.80" fill="#B877D9"/><rect x="508.91" y="1753.01" width="2.70" height="15.90" fill="#FF9830"/><rect x="508.91" y="1768.91" width="2.70" height="63.59" fill="#73BF69"/><rect x="508.91" y="1831.60" width="2.70" height="1.80" fill="#B877D9"/><rect x="513.73" y="1773.04" width="2.70" height="11.89" fill="#FF9830"/><rect x="513.73" y="1784.94" width="2.70" height="47.56" fill="#73BF69"/><rect x="513.73" y="1831.60" width="2.70" height="1.80" fill="#B877D9"/><rect x="518.55" y="1771.99" width="2.70" height="12.10" fill="#FF9830"/><rect x="518.55" y="1784.09" width="2.70" height="48.41" fill="#73BF69"/><rect x="518.55" y="1831.60" width="2.70" height="1.80" fill="#B877D9"/><rect x="523.37" y="1769.88" width="2.70" height="12.52" fill="#FF9830"/><rect x="523.37" y="1782.41" width="2.70" height="50.09" fill="#73BF69"/><rect x="523.37" y="1831.60" width="2.70" height="1.80" fill="#B877D9"/><rect x="528.19" y="1778.95" width="2.70" height="10.71" fill="#FF9830"/><rect x="528.19" y="1789.66" width="2.70" height="42.84" fill="#73BF69"/><rect x="528.19" y="1831.60" width="2.70" height="1.80" fill="#B877D9"/><rect x="533.01" y="1804.88" width="2.70" height="5.52" fill="#FF9830"/><rect x="533.01" y="1810.40" width="2.70" height="22.10" fill="#73BF69"/><rect x="533.01" y="1831.60" width="2.70" height="1.80" fill="#B877D9"/><rect x="537.83" y="1831.60" width="2.70" height="1.80" fill="#B877D9"/><rect x="542.65" y="1831.60" width="2.70" height="1.80" fill="#B877D9"/><rect x="547.47" y="1831.60" width="2.70" height="1.80" fill="#B877D9"/><rect x="552.29" y="1831.60" width="2.70" height="1.80" fill="#B877D9"/><rect x="557.11" y="1831.60" width="2.70" height="1.80" fill="#B877D9"/><rect x="561.93" y="1831.60" width="2.70" height="1.80" fill="#B877D9"/><rect x="566.75" y="1831.60" width="2.70" height="1.80" fill="#B877D9"/><rect x="571.57" y="1803.83" width="2.70" height="5.73" fill="#FF9830"/><rect x="571.57" y="1809.56" width="2.70" height="22.94" fill="#73BF69"/><rect x="571.57" y="1831.60" width="2.70" height="1.80" fill="#B877D9"/><rect x="576.39" y="1780.84" width="2.70" height="10.33" fill="#FF9830"/><rect x="576.39" y="1791.18" width="2.70" height="41.32" fill="#73BF69"/><rect x="576.39" y="1831.60" width="2.70" height="1.80" fill="#B877D9"/><rect x="581.22" y="1751.96" width="2.70" height="16.11" fill="#FF9830"/><rect x="581.22" y="1768.07" width="2.70" height="64.43" fill="#73BF69"/><rect x="581.22" y="1831.60" width="2.70" height="1.80" fill="#B877D9"/><rect x="586.04" y="1754.07" width="2.70" height="15.69" fill="#FF9830"/><rect x="586.04" y="1769.75" width="2.70" height="62.75" fill="#73BF69"/><rect x="586.04" y="1831.60" width="2.70" height="1.80" fill="#B877D9"/><rect x="590.86" y="1750.06" width="2.70" height="16.49" fill="#FF9830"/><rect x="590.86" y="1766.55" width="2.70" height="65.95" fill="#73BF69"/><rect x="590.86" y="1831.60" width="2.70" height="1.80" fill="#B877D9"/><rect x="595.68" y="1692.93" width="2.70" height="27.91" fill="#FF9830"/><rect x="595.68" y="1720.84" width="2.70" height="111.66" fill="#73BF69"/><rect x="595.68" y="1831.60" width="2.70" height="1.80" fill="#B877D9"/><rect x="600.50" y="1649.92" width="2.70" height="36.52" fill="#FF9830"/><rect x="600.50" y="1686.43" width="2.70" height="146.07" fill="#73BF69"/><rect x="600.50" y="1831.60" width="2.70" height="1.80" fill="#B877D9"/><rect x="605.32" y="1633.68" width="2.70" height="39.76" fill="#FF9830"/><rect x="605.32" y="1673.44" width="2.70" height="159.06" fill="#73BF69"/><rect x="605.32" y="1831.60" width="2.70" height="1.80" fill="#B877D9"/><rect x="610.14" y="1712.96" width="2.70" height="23.91" fill="#FF9830"/><rect x="610.14" y="1736.86" width="2.70" height="95.64" fill="#73BF69"/><rect x="610.14" y="1831.60" width="2.70" height="1.80" fill="#B877D9"/><rect x="614.96" y="1774.94" width="2.70" height="11.51" fill="#FF9830"/><rect x="614.96" y="1786.45" width="2.70" height="46.05" fill="#73BF69"/><rect x="614.96" y="1831.60" width="2.70" height="1.80" fill="#B877D9"/><rect x="619.78" y="1794.97" width="2.70" height="7.51" fill="#FF9830"/><rect x="619.78" y="1802.48" width="2.70" height="30.02" fill="#73BF69"/><rect x="619.78" y="1831.60" width="2.70" height="1.80" fill="#B877D9"/><rect x="624.60" y="1805.93" width="2.70" height="5.31" fill="#FF9830"/><rect x="624.60" y="1811.25" width="2.70" height="21.25" fill="#73BF69"/><rect x="624.60" y="1831.60" width="2.70" height="1.80" fill="#B877D9"/><rect x="629.42" y="1818.16" width="2.70" height="2.87" fill="#FF9830"/><rect x="629.42" y="1821.03" width="2.70" height="11.47" fill="#73BF69"/><rect x="629.42" y="1831.60" width="2.70" height="1.80" fill="#B877D9"/><rect x="634.24" y="1831.02" width="2.70" height="1.48" fill="#73BF69"/><rect x="634.24" y="1831.60" width="2.70" height="1.80" fill="#B877D9"/><rect x="639.06" y="1831.60" width="2.70" height="1.80" fill="#B877D9"/><rect x="643.88" y="1831.60" width="2.70" height="1.80" fill="#B877D9"/><rect x="648.70" y="1831.60" width="2.70" height="1.80" fill="#B877D9"/><rect x="653.52" y="1831.60" width="2.70" height="1.80" fill="#B877D9"/><rect x="658.34" y="1831.60" width="2.70" height="1.80" fill="#B877D9"/><rect x="663.16" y="1831.60" width="2.70" height="1.80" fill="#B877D9"/><rect x="667.98" y="1821.96" width="2.70" height="2.11" fill="#FF9830"/><rect x="667.98" y="1824.07" width="2.70" height="8.43" fill="#73BF69"/><rect x="667.98" y="1831.60" width="2.70" height="1.80" fill="#B877D9"/><rect x="672.80" y="1799.82" width="2.70" height="6.54" fill="#FF9830"/><rect x="672.80" y="1806.36" width="2.70" height="26.14" fill="#73BF69"/><rect x="672.80" y="1831.60" width="2.70" height="1.80" fill="#B877D9"/><rect x="677.63" y="1784.01" width="2.70" height="9.70" fill="#FF9830"/><rect x="677.63" y="1793.71" width="2.70" height="38.79" fill="#73BF69"/><rect x="677.63" y="1831.60" width="2.70" height="1.80" fill="#B877D9"/><rect x="682.45" y="1765.88" width="2.70" height="13.32" fill="#FF9830"/><rect x="682.45" y="1779.20" width="2.70" height="53.30" fill="#73BF69"/><rect x="682.45" y="1831.60" width="2.70" height="1.80" fill="#B877D9"/><rect x="687.27" y="1767.98" width="2.70" height="12.90" fill="#FF9830"/><rect x="687.27" y="1780.89" width="2.70" height="51.61" fill="#73BF69"/><rect x="687.27" y="1831.60" width="2.70" height="1.80" fill="#B877D9"/><rect x="692.09" y="1759.97" width="2.70" height="14.51" fill="#FF9830"/><rect x="692.09" y="1774.48" width="2.70" height="58.02" fill="#73BF69"/><rect x="692.09" y="1831.60" width="2.70" height="1.80" fill="#B877D9"/><rect x="696.91" y="1762.92" width="2.70" height="13.92" fill="#FF9830"/><rect x="696.91" y="1776.84" width="2.70" height="55.66" fill="#73BF69"/><rect x="696.91" y="1831.60" width="2.70" height="1.80" fill="#B877D9"/><rect x="701.73" y="1754.91" width="2.70" height="15.52" fill="#FF9830"/><rect x="701.73" y="1770.43" width="2.70" height="62.07" fill="#73BF69"/><rect x="701.73" y="1831.60" width="2.70" height="1.80" fill="#B877D9"/><rect x="706.55" y="1754.07" width="2.70" height="15.69" fill="#FF9830"/><rect x="706.55" y="1769.75" width="2.70" height="62.75" fill="#73BF69"/><rect x="706.55" y="1831.60" width="2.70" height="1.80" fill="#B877D9"/><rect x="711.37" y="1761.87" width="2.70" height="14.13" fill="#FF9830"/><rect x="711.37" y="1776.00" width="2.70" height="56.50" fill="#73BF69"/><rect x="711.37" y="1831.60" width="2.70" height="1.80" fill="#B877D9"/><rect x="716.19" y="1773.89" width="2.70" height="11.72" fill="#FF9830"/><rect x="716.19" y="1785.61" width="2.70" height="46.89" fill="#73BF69"/><rect x="716.19" y="1831.60" width="2.70" height="1.80" fill="#B877D9"/><rect x="721.01" y="1773.04" width="2.70" height="11.89" fill="#FF9830"/><rect x="721.01" y="1784.94" width="2.70" height="47.56" fill="#73BF69"/><rect x="721.01" y="1831.60" width="2.70" height="1.80" fill="#B877D9"/><rect x="725.83" y="1790.97" width="2.70" height="8.31" fill="#FF9830"/><rect x="725.83" y="1799.27" width="2.70" height="33.23" fill="#73BF69"/><rect x="725.83" y="1831.60" width="2.70" height="1.80" fill="#B877D9"/><rect x="730.65" y="1806.99" width="2.70" height="5.10" fill="#FF9830"/><rect x="730.65" y="1812.09" width="2.70" height="20.41" fill="#73BF69"/><rect x="730.65" y="1831.60" width="2.70" height="1.80" fill="#B877D9"/><rect x="735.47" y="1831.60" width="2.70" height="1.80" fill="#B877D9"/><rect x="740.29" y="1831.60" width="2.70" height="1.80" fill="#B877D9"/><rect x="745.11" y="1831.60" width="2.70" height="1.80" fill="#B877D9"/><rect x="749.93" y="1831.60" width="2.70" height="1.80" fill="#B877D9"/><rect x="754.75" y="1831.60" width="2.70" height="1.80" fill="#B877D9"/><rect x="759.57" y="1831.60" width="2.70" height="1.80" fill="#B877D9"/><rect x="764.39" y="1817.11" width="2.70" height="3.08" fill="#FF9830"/><rect x="764.39" y="1820.19" width="2.70" height="12.31" fill="#73BF69"/><rect x="764.39" y="1831.60" width="2.70" height="1.80" fill="#B877D9"/><rect x="769.21" y="1793.92" width="2.70" height="7.72" fill="#FF9830"/><rect x="769.21" y="1801.63" width="2.70" height="30.87" fill="#73BF69"/><rect x="769.21" y="1831.60" width="2.70" height="1.80" fill="#B877D9"/><rect x="774.04" y="1776.00" width="2.70" height="11.30" fill="#FF9830"/><rect x="774.04" y="1787.30" width="2.70" height="45.20" fill="#73BF69"/><rect x="774.04" y="1831.60" width="2.70" height="1.80" fill="#B877D9"/><rect x="778.86" y="1769.04" width="2.70" height="12.69" fill="#FF9830"/><rect x="778.86" y="1781.73" width="2.70" height="50.77" fill="#73BF69"/><rect x="778.86" y="1831.60" width="2.70" height="1.80" fill="#B877D9"/><rect x="783.68" y="1769.88" width="2.70" height="12.52" fill="#FF9830"/><rect x="783.68" y="1782.41" width="2.70" height="50.09" fill="#73BF69"/><rect x="783.68" y="1831.60" width="2.70" height="1.80" fill="#B877D9"/><rect x="788.50" y="1769.04" width="2.70" height="12.69" fill="#FF9830"/><rect x="788.50" y="1781.73" width="2.70" height="50.77" fill="#73BF69"/><rect x="788.50" y="1831.60" width="2.70" height="1.80" fill="#B877D9"/><rect x="793.32" y="1770.94" width="2.70" height="12.31" fill="#FF9830"/><rect x="793.32" y="1783.25" width="2.70" height="49.25" fill="#73BF69"/><rect x="793.32" y="1831.60" width="2.70" height="1.80" fill="#B877D9"/><rect x="798.14" y="1769.88" width="2.70" height="12.52" fill="#FF9830"/><rect x="798.14" y="1782.41" width="2.70" height="50.09" fill="#73BF69"/><rect x="798.14" y="1831.60" width="2.70" height="1.80" fill="#B877D9"/><rect x="802.96" y="1776.00" width="2.70" height="11.30" fill="#FF9830"/><rect x="802.96" y="1787.30" width="2.70" height="45.20" fill="#73BF69"/><rect x="802.96" y="1831.60" width="2.70" height="1.80" fill="#B877D9"/><rect x="807.78" y="1784.01" width="2.70" height="9.70" fill="#FF9830"/><rect x="807.78" y="1793.71" width="2.70" height="38.79" fill="#73BF69"/><rect x="807.78" y="1831.60" width="2.70" height="1.80" fill="#B877D9"/><rect x="812.60" y="1792.86" width="2.70" height="7.93" fill="#FF9830"/><rect x="812.60" y="1800.79" width="2.70" height="31.71" fill="#73BF69"/><rect x="812.60" y="1831.60" width="2.70" height="1.80" fill="#B877D9"/><rect x="817.42" y="1799.82" width="2.70" height="6.54" fill="#FF9830"/><rect x="817.42" y="1806.36" width="2.70" height="26.14" fill="#73BF69"/><rect x="817.42" y="1831.60" width="2.70" height="1.80" fill="#B877D9"/><rect x="822.24" y="1812.89" width="2.70" height="3.92" fill="#FF9830"/><rect x="822.24" y="1816.81" width="2.70" height="15.69" fill="#73BF69"/><rect x="822.24" y="1831.60" width="2.70" height="1.80" fill="#B877D9"/><rect x="827.06" y="1824.91" width="2.70" height="1.52" fill="#FF9830"/><rect x="827.06" y="1826.43" width="2.70" height="6.07" fill="#73BF69"/><rect x="827.06" y="1831.60" width="2.70" height="1.80" fill="#B877D9"/><rect x="831.88" y="1831.60" width="2.70" height="1.80" fill="#B877D9"/><rect x="836.70" y="1831.60" width="2.70" height="1.80" fill="#B877D9"/><rect x="841.52" y="1831.60" width="2.70" height="1.80" fill="#B877D9"/><rect x="846.34" y="1831.60" width="2.70" height="1.80" fill="#B877D9"/><rect x="851.16" y="1831.60" width="2.70" height="1.80" fill="#B877D9"/><rect x="855.98" y="1831.60" width="2.70" height="1.80" fill="#B877D9"/><rect x="860.80" y="1821.96" width="2.70" height="2.11" fill="#FF9830"/><rect x="860.80" y="1824.07" width="2.70" height="8.43" fill="#73BF69"/><rect x="860.80" y="1831.60" width="2.70" height="1.80" fill="#B877D9"/><rect x="865.62" y="1804.88" width="2.70" height="5.52" fill="#FF9830"/><rect x="865.62" y="1810.40" width="2.70" height="22.10" fill="#73BF69"/><rect x="865.62" y="1831.60" width="2.70" height="1.80" fill="#B877D9"/><rect x="870.45" y="1785.91" width="2.70" height="9.32" fill="#FF9830"/><rect x="870.45" y="1795.22" width="2.70" height="37.28" fill="#73BF69"/><rect x="870.45" y="1831.60" width="2.70" height="1.80" fill="#B877D9"/><rect x="875.27" y="1777.05" width="2.70" height="11.09" fill="#FF9830"/><rect x="875.27" y="1788.14" width="2.70" height="44.36" fill="#73BF69"/><rect x="875.27" y="1831.60" width="2.70" height="1.80" fill="#B877D9"/><rect x="880.09" y="1773.04" width="2.70" height="11.89" fill="#FF9830"/><rect x="880.09" y="1784.94" width="2.70" height="47.56" fill="#73BF69"/><rect x="880.09" y="1831.60" width="2.70" height="1.80" fill="#B877D9"/><rect x="884.91" y="1781.90" width="2.70" height="10.12" fill="#FF9830"/><rect x="884.91" y="1792.02" width="2.70" height="40.48" fill="#73BF69"/><rect x="884.91" y="1831.60" width="2.70" height="1.80" fill="#B877D9"/><rect x="889.73" y="1785.06" width="2.70" height="9.49" fill="#FF9830"/><rect x="889.73" y="1794.55" width="2.70" height="37.95" fill="#73BF69"/><rect x="889.73" y="1831.60" width="2.70" height="1.80" fill="#B877D9"/><rect x="894.55" y="1792.02" width="2.70" height="8.10" fill="#FF9830"/><rect x="894.55" y="1800.12" width="2.70" height="32.38" fill="#73BF69"/><rect x="894.55" y="1831.60" width="2.70" height="1.80" fill="#B877D9"/><rect x="899.37" y="1789.91" width="2.70" height="8.52" fill="#FF9830"/><rect x="899.37" y="1798.43" width="2.70" height="34.07" fill="#73BF69"/><rect x="899.37" y="1831.60" width="2.70" height="1.80" fill="#B877D9"/><rect x="904.19" y="1789.07" width="2.70" height="8.69" fill="#FF9830"/><rect x="904.19" y="1797.75" width="2.70" height="34.75" fill="#73BF69"/><rect x="904.19" y="1831.60" width="2.70" height="1.80" fill="#B877D9"/><rect x="909.01" y="1782.95" width="2.70" height="9.91" fill="#FF9830"/><rect x="909.01" y="1792.86" width="2.70" height="39.64" fill="#73BF69"/><rect x="909.01" y="1831.60" width="2.70" height="1.80" fill="#B877D9"/><rect x="913.83" y="1780.00" width="2.70" height="10.50" fill="#FF9830"/><rect x="913.83" y="1790.50" width="2.70" height="42.00" fill="#73BF69"/><rect x="913.83" y="1831.60" width="2.70" height="1.80" fill="#B877D9"/><rect x="918.65" y="1797.92" width="2.70" height="6.92" fill="#FF9830"/><rect x="918.65" y="1804.84" width="2.70" height="27.66" fill="#73BF69"/><rect x="918.65" y="1831.60" width="2.70" height="1.80" fill="#B877D9"/><rect x="923.47" y="1816.90" width="2.70" height="3.12" fill="#FF9830"/><rect x="923.47" y="1820.02" width="2.70" height="12.48" fill="#73BF69"/><rect x="923.47" y="1831.60" width="2.70" height="1.80" fill="#B877D9"/><rect x="928.29" y="1831.60" width="2.70" height="1.80" fill="#B877D9"/><rect x="933.11" y="1831.60" width="2.70" height="1.80" fill="#B877D9"/><rect x="937.93" y="1831.60" width="2.70" height="1.80" fill="#B877D9"/><rect x="942.75" y="1831.60" width="2.70" height="1.80" fill="#B877D9"/><rect x="947.57" y="1831.60" width="2.70" height="1.80" fill="#B877D9"/><rect x="952.39" y="1831.60" width="2.70" height="1.80" fill="#B877D9"/><rect x="957.21" y="1813.95" width="2.70" height="3.71" fill="#FF9830"/><rect x="957.21" y="1817.66" width="2.70" height="14.84" fill="#73BF69"/><rect x="957.21" y="1831.60" width="2.70" height="1.80" fill="#B877D9"/><rect x="962.03" y="1792.86" width="2.70" height="7.93" fill="#FF9830"/><rect x="962.03" y="1800.79" width="2.70" height="31.71" fill="#73BF69"/><rect x="962.03" y="1831.60" width="2.70" height="1.80" fill="#B877D9"/><rect x="966.86" y="1773.04" width="2.70" height="11.89" fill="#FF9830"/><rect x="966.86" y="1784.94" width="2.70" height="47.56" fill="#73BF69"/><rect x="966.86" y="1831.60" width="2.70" height="1.80" fill="#B877D9"/><rect x="971.68" y="1771.99" width="2.70" height="12.10" fill="#FF9830"/><rect x="971.68" y="1784.09" width="2.70" height="48.41" fill="#73BF69"/><rect x="971.68" y="1831.60" width="2.70" height="1.80" fill="#B877D9"/><rect x="976.50" y="1769.88" width="2.70" height="12.52" fill="#FF9830"/><rect x="976.50" y="1782.41" width="2.70" height="50.09" fill="#73BF69"/><rect x="976.50" y="1831.60" width="2.70" height="1.80" fill="#B877D9"/><rect x="981.32" y="1776.00" width="2.70" height="11.30" fill="#FF9830"/><rect x="981.32" y="1787.30" width="2.70" height="45.20" fill="#73BF69"/><rect x="981.32" y="1831.60" width="2.70" height="1.80" fill="#B877D9"/><rect x="986.14" y="1785.91" width="2.70" height="9.32" fill="#FF9830"/><rect x="986.14" y="1795.22" width="2.70" height="37.28" fill="#73BF69"/><rect x="986.14" y="1831.60" width="2.70" height="1.80" fill="#B877D9"/><rect x="990.96" y="1792.02" width="2.70" height="8.10" fill="#FF9830"/><rect x="990.96" y="1800.12" width="2.70" height="32.38" fill="#73BF69"/><rect x="990.96" y="1831.60" width="2.70" height="1.80" fill="#B877D9"/><rect x="995.78" y="1790.97" width="2.70" height="8.31" fill="#FF9830"/><rect x="995.78" y="1799.27" width="2.70" height="33.23" fill="#73BF69"/><rect x="995.78" y="1831.60" width="2.70" height="1.80" fill="#B877D9"/><rect x="1000.60" y="1784.01" width="2.70" height="9.70" fill="#FF9830"/><rect x="1000.60" y="1793.71" width="2.70" height="38.79" fill="#73BF69"/><rect x="1000.60" y="1831.60" width="2.70" height="1.80" fill="#B877D9"/><rect x="1005.42" y="1794.97" width="2.70" height="7.51" fill="#FF9830"/><rect x="1005.42" y="1802.48" width="2.70" height="30.02" fill="#73BF69"/><rect x="1005.42" y="1831.60" width="2.70" height="1.80" fill="#B877D9"/><rect x="1010.24" y="1797.08" width="2.70" height="7.08" fill="#FF9830"/><rect x="1010.24" y="1804.16" width="2.70" height="28.34" fill="#73BF69"/><rect x="1010.24" y="1831.60" width="2.70" height="1.80" fill="#B877D9"/><rect x="1015.06" y="1812.89" width="2.70" height="3.92" fill="#FF9830"/><rect x="1015.06" y="1816.81" width="2.70" height="15.69" fill="#73BF69"/><rect x="1015.06" y="1831.60" width="2.70" height="1.80" fill="#B877D9"/><rect x="1019.88" y="1820.06" width="2.70" height="2.49" fill="#FF9830"/><rect x="1019.88" y="1822.55" width="2.70" height="9.95" fill="#73BF69"/><rect x="1019.88" y="1831.60" width="2.70" height="1.80" fill="#B877D9"/><rect x="1024.70" y="1831.60" width="2.70" height="1.80" fill="#B877D9"/><rect x="1029.52" y="1831.60" width="2.70" height="1.80" fill="#B877D9"/><rect x="1034.34" y="1831.60" width="2.70" height="1.80" fill="#B877D9"/><rect x="1039.16" y="1831.60" width="2.70" height="1.80" fill="#B877D9"/><rect x="1043.98" y="1831.60" width="2.70" height="1.80" fill="#B877D9"/><rect x="1048.80" y="1831.60" width="2.70" height="1.80" fill="#B877D9"/><rect x="1053.62" y="1817.95" width="2.70" height="2.91" fill="#FF9830"/><rect x="1053.62" y="1820.86" width="2.70" height="11.64" fill="#73BF69"/><rect x="1053.62" y="1831.60" width="2.70" height="1.80" fill="#B877D9"/><rect x="1058.45" y="1792.02" width="2.70" height="8.10" fill="#FF9830"/><rect x="1058.45" y="1800.12" width="2.70" height="32.38" fill="#73BF69"/><rect x="1058.45" y="1831.60" width="2.70" height="1.80" fill="#B877D9"/><rect x="1063.27" y="1767.98" width="2.70" height="12.90" fill="#FF9830"/><rect x="1063.27" y="1780.89" width="2.70" height="51.61" fill="#73BF69"/><rect x="1063.27" y="1831.60" width="2.70" height="1.80" fill="#B877D9"/><rect x="1068.09" y="1753.01" width="2.70" height="15.90" fill="#FF9830"/><rect x="1068.09" y="1768.91" width="2.70" height="63.59" fill="#73BF69"/><rect x="1068.09" y="1831.60" width="2.70" height="1.80" fill="#B877D9"/><rect x="1072.91" y="1751.96" width="2.70" height="16.11" fill="#FF9830"/><rect x="1072.91" y="1768.07" width="2.70" height="64.43" fill="#73BF69"/><rect x="1072.91" y="1831.60" width="2.70" height="1.80" fill="#B877D9"/><rect x="1077.73" y="1749.01" width="2.70" height="16.70" fill="#FF9830"/><rect x="1077.73" y="1765.71" width="2.70" height="66.79" fill="#73BF69"/><rect x="1077.73" y="1831.60" width="2.70" height="1.80" fill="#B877D9"/><rect x="1082.55" y="1759.97" width="2.70" height="14.51" fill="#FF9830"/><rect x="1082.55" y="1774.48" width="2.70" height="58.02" fill="#73BF69"/><rect x="1082.55" y="1831.60" width="2.70" height="1.80" fill="#B877D9"/><rect x="1087.37" y="1754.91" width="2.70" height="15.52" fill="#FF9830"/><rect x="1087.37" y="1770.43" width="2.70" height="62.07" fill="#73BF69"/><rect x="1087.37" y="1831.60" width="2.70" height="1.80" fill="#B877D9"/><rect x="1092.19" y="1761.03" width="2.70" height="14.29" fill="#FF9830"/><rect x="1092.19" y="1775.32" width="2.70" height="57.18" fill="#73BF69"/><rect x="1092.19" y="1831.60" width="2.70" height="1.80" fill="#B877D9"/><rect x="1097.01" y="1750.91" width="2.70" height="16.32" fill="#FF9830"/><rect x="1097.01" y="1767.22" width="2.70" height="65.28" fill="#73BF69"/><rect x="1097.01" y="1831.60" width="2.70" height="1.80" fill="#B877D9"/><rect x="1101.83" y="1758.92" width="2.70" height="14.72" fill="#FF9830"/><rect x="1101.83" y="1773.63" width="2.70" height="58.87" fill="#73BF69"/><rect x="1101.83" y="1831.60" width="2.70" height="1.80" fill="#B877D9"/><rect x="1106.65" y="1765.03" width="2.70" height="13.49" fill="#FF9830"/><rect x="1106.65" y="1778.53" width="2.70" height="53.97" fill="#73BF69"/><rect x="1106.65" y="1831.60" width="2.70" height="1.80" fill="#B877D9"/><rect x="1111.47" y="1792.02" width="2.70" height="8.10" fill="#FF9830"/><rect x="1111.47" y="1800.12" width="2.70" height="32.38" fill="#73BF69"/><rect x="1111.47" y="1831.60" width="2.70" height="1.80" fill="#B877D9"/><rect x="1116.29" y="1815.00" width="2.70" height="3.50" fill="#FF9830"/><rect x="1116.29" y="1818.50" width="2.70" height="14.00" fill="#73BF69"/><rect x="1116.29" y="1831.60" width="2.70" height="1.80" fill="#B877D9"/><rect x="1121.11" y="1831.60" width="2.70" height="1.80" fill="#B877D9"/><rect x="1125.93" y="1831.60" width="2.70" height="1.80" fill="#B877D9"/><rect x="1130.75" y="1831.60" width="2.70" height="1.80" fill="#B877D9"/><rect x="1135.57" y="1831.60" width="2.70" height="1.80" fill="#B877D9"/><rect x="1140.39" y="1831.60" width="2.70" height="1.80" fill="#B877D9"/><rect x="1145.21" y="1831.60" width="2.70" height="1.80" fill="#B877D9"/><rect x="1150.03" y="1810.99" width="2.70" height="4.30" fill="#FF9830"/><rect x="1150.03" y="1815.30" width="2.70" height="17.20" fill="#73BF69"/><rect x="1150.03" y="1831.60" width="2.70" height="1.80" fill="#B877D9"/><rect x="1154.86" y="1781.90" width="2.70" height="10.12" fill="#FF9830"/><rect x="1154.86" y="1792.02" width="2.70" height="40.48" fill="#73BF69"/><rect x="1154.86" y="1831.60" width="2.70" height="1.80" fill="#B877D9"/><rect x="1159.68" y="1758.92" width="2.70" height="14.72" fill="#FF9830"/><rect x="1159.68" y="1773.63" width="2.70" height="58.87" fill="#73BF69"/><rect x="1159.68" y="1831.60" width="2.70" height="1.80" fill="#B877D9"/><rect x="1164.50" y="1753.01" width="2.70" height="15.90" fill="#FF9830"/><rect x="1164.50" y="1768.91" width="2.70" height="63.59" fill="#73BF69"/><rect x="1164.50" y="1831.60" width="2.70" height="1.80" fill="#B877D9"/><rect x="1169.32" y="1750.06" width="2.70" height="16.49" fill="#FF9830"/><rect x="1169.32" y="1766.55" width="2.70" height="65.95" fill="#73BF69"/><rect x="1169.32" y="1831.60" width="2.70" height="1.80" fill="#B877D9"/><rect x="1174.14" y="1746.06" width="2.70" height="17.29" fill="#FF9830"/><rect x="1174.14" y="1763.35" width="2.70" height="69.15" fill="#73BF69"/><rect x="1174.14" y="1831.60" width="2.70" height="1.80" fill="#B877D9"/><rect x="1178.96" y="1745.00" width="2.70" height="17.50" fill="#FF9830"/><rect x="1178.96" y="1762.50" width="2.70" height="70.00" fill="#73BF69"/><rect x="1178.96" y="1831.60" width="2.70" height="1.80" fill="#B877D9"/><rect x="1183.78" y="1750.06" width="2.70" height="16.49" fill="#FF9830"/><rect x="1183.78" y="1766.55" width="2.70" height="65.95" fill="#73BF69"/><rect x="1183.78" y="1831.60" width="2.70" height="1.80" fill="#B877D9"/><rect x="1188.60" y="1753.01" width="2.70" height="15.90" fill="#FF9830"/><rect x="1188.60" y="1768.91" width="2.70" height="63.59" fill="#73BF69"/><rect x="1188.60" y="1831.60" width="2.70" height="1.80" fill="#B877D9"/><rect x="1193.42" y="1758.92" width="2.70" height="14.72" fill="#FF9830"/><rect x="1193.42" y="1773.63" width="2.70" height="58.87" fill="#73BF69"/><rect x="1193.42" y="1831.60" width="2.70" height="1.80" fill="#B877D9"/><rect x="1198.24" y="1769.88" width="2.70" height="12.52" fill="#FF9830"/><rect x="1198.24" y="1782.41" width="2.70" height="50.09" fill="#73BF69"/><rect x="1198.24" y="1831.60" width="2.70" height="1.80" fill="#B877D9"/><rect x="1203.06" y="1784.01" width="2.70" height="9.70" fill="#FF9830"/><rect x="1203.06" y="1793.71" width="2.70" height="38.79" fill="#73BF69"/><rect x="1203.06" y="1831.60" width="2.70" height="1.80" fill="#B877D9"/><rect x="1207.88" y="1806.99" width="2.70" height="5.10" fill="#FF9830"/><rect x="1207.88" y="1812.09" width="2.70" height="20.41" fill="#73BF69"/><rect x="1207.88" y="1831.60" width="2.70" height="1.80" fill="#B877D9"/><rect x="1212.70" y="1823.01" width="2.70" height="1.90" fill="#FF9830"/><rect x="1212.70" y="1824.91" width="2.70" height="7.59" fill="#73BF69"/><rect x="1212.70" y="1831.60" width="2.70" height="1.80" fill="#B877D9"/><rect x="1217.52" y="1831.60" width="2.70" height="1.80" fill="#B877D9"/><rect x="1222.34" y="1831.60" width="2.70" height="1.80" fill="#B877D9"/><rect x="1227.16" y="1831.60" width="2.70" height="1.80" fill="#B877D9"/><rect x="1231.98" y="1831.60" width="2.70" height="1.80" fill="#B877D9"/><rect x="1236.80" y="1831.60" width="2.70" height="1.80" fill="#B877D9"/><rect x="1241.62" y="1831.60" width="2.70" height="1.80" fill="#B877D9"/><rect x="1246.44" y="1812.89" width="2.70" height="3.92" fill="#FF9830"/><rect x="1246.44" y="1816.81" width="2.70" height="15.69" fill="#73BF69"/><rect x="1246.44" y="1831.60" width="2.70" height="1.80" fill="#B877D9"/><rect x="1251.27" y="1784.01" width="2.70" height="9.70" fill="#FF9830"/><rect x="1251.27" y="1793.71" width="2.70" height="38.79" fill="#73BF69"/><rect x="1251.27" y="1831.60" width="2.70" height="1.80" fill="#B877D9"/><rect x="1256.09" y="1765.03" width="2.70" height="13.49" fill="#FF9830"/><rect x="1256.09" y="1778.53" width="2.70" height="53.97" fill="#73BF69"/><rect x="1256.09" y="1831.60" width="2.70" height="1.80" fill="#B877D9"/><rect x="1260.91" y="1758.92" width="2.70" height="14.72" fill="#FF9830"/><rect x="1260.91" y="1773.63" width="2.70" height="58.87" fill="#73BF69"/><rect x="1260.91" y="1831.60" width="2.70" height="1.80" fill="#B877D9"/><rect x="1265.73" y="1769.04" width="2.70" height="12.69" fill="#FF9830"/><rect x="1265.73" y="1781.73" width="2.70" height="50.77" fill="#73BF69"/><rect x="1265.73" y="1831.60" width="2.70" height="1.80" fill="#B877D9"/><rect x="1270.55" y="1767.98" width="2.70" height="12.90" fill="#FF9830"/><rect x="1270.55" y="1780.89" width="2.70" height="51.61" fill="#73BF69"/><rect x="1270.55" y="1831.60" width="2.70" height="1.80" fill="#B877D9"/><rect x="1275.37" y="1769.04" width="2.70" height="12.69" fill="#FF9830"/><rect x="1275.37" y="1781.73" width="2.70" height="50.77" fill="#73BF69"/><rect x="1275.37" y="1831.60" width="2.70" height="1.80" fill="#B877D9"/><rect x="1280.19" y="1769.04" width="2.70" height="12.69" fill="#FF9830"/><rect x="1280.19" y="1781.73" width="2.70" height="50.77" fill="#73BF69"/><rect x="1280.19" y="1831.60" width="2.70" height="1.80" fill="#B877D9"/><rect x="1285.01" y="1765.03" width="2.70" height="13.49" fill="#FF9830"/><rect x="1285.01" y="1778.53" width="2.70" height="53.97" fill="#73BF69"/><rect x="1285.01" y="1831.60" width="2.70" height="1.80" fill="#B877D9"/><rect x="1289.83" y="1771.99" width="2.70" height="12.10" fill="#FF9830"/><rect x="1289.83" y="1784.09" width="2.70" height="48.41" fill="#73BF69"/><rect x="1289.83" y="1831.60" width="2.70" height="1.80" fill="#B877D9"/><rect x="1294.65" y="1769.88" width="2.70" height="12.52" fill="#FF9830"/><rect x="1294.65" y="1782.41" width="2.70" height="50.09" fill="#73BF69"/><rect x="1294.65" y="1831.60" width="2.70" height="1.80" fill="#B877D9"/><rect x="1299.47" y="1785.06" width="2.70" height="9.49" fill="#FF9830"/><rect x="1299.47" y="1794.55" width="2.70" height="37.95" fill="#73BF69"/><rect x="1299.47" y="1831.60" width="2.70" height="1.80" fill="#B877D9"/><rect x="1304.29" y="1801.93" width="2.70" height="6.11" fill="#FF9830"/><rect x="1304.29" y="1808.04" width="2.70" height="24.46" fill="#73BF69"/><rect x="1304.29" y="1831.60" width="2.70" height="1.80" fill="#B877D9"/><rect x="1309.11" y="1821.96" width="2.70" height="2.11" fill="#FF9830"/><rect x="1309.11" y="1824.07" width="2.70" height="8.43" fill="#73BF69"/><rect x="1309.11" y="1831.60" width="2.70" height="1.80" fill="#B877D9"/><rect x="1313.93" y="1831.60" width="2.70" height="1.80" fill="#B877D9"/><rect x="1318.75" y="1831.60" width="2.70" height="1.80" fill="#B877D9"/><rect x="1323.57" y="1831.60" width="2.70" height="1.80" fill="#B877D9"/><rect x="1328.39" y="1831.60" width="2.70" height="1.80" fill="#B877D9"/><rect x="1333.21" y="1831.60" width="2.70" height="1.80" fill="#B877D9"/><rect x="1338.03" y="1831.60" width="2.70" height="1.80" fill="#B877D9"/><rect x="1342.85" y="1806.99" width="2.70" height="5.10" fill="#FF9830"/><rect x="1342.85" y="1812.09" width="2.70" height="20.41" fill="#73BF69"/><rect x="1342.85" y="1831.60" width="2.70" height="1.80" fill="#B877D9"/><rect x="1347.68" y="1777.89" width="2.70" height="10.92" fill="#FF9830"/><rect x="1347.68" y="1788.81" width="2.70" height="43.69" fill="#73BF69"/><rect x="1347.68" y="1831.60" width="2.70" height="1.80" fill="#B877D9"/><rect x="1352.50" y="1750.91" width="2.70" height="16.32" fill="#FF9830"/><rect x="1352.50" y="1767.22" width="2.70" height="65.28" fill="#73BF69"/><rect x="1352.50" y="1831.60" width="2.70" height="1.80" fill="#B877D9"/><rect x="1357.32" y="1753.01" width="2.70" height="15.90" fill="#FF9830"/><rect x="1357.32" y="1768.91" width="2.70" height="63.59" fill="#73BF69"/><rect x="1357.32" y="1831.60" width="2.70" height="1.80" fill="#B877D9"/><rect x="1362.14" y="1769.04" width="2.70" height="12.69" fill="#FF9830"/><rect x="1362.14" y="1781.73" width="2.70" height="50.77" fill="#73BF69"/><rect x="1362.14" y="1831.60" width="2.70" height="1.80" fill="#B877D9"/><rect x="1366.96" y="1778.95" width="2.70" height="10.71" fill="#FF9830"/><rect x="1366.96" y="1789.66" width="2.70" height="42.84" fill="#73BF69"/><rect x="1366.96" y="1831.60" width="2.70" height="1.80" fill="#B877D9"/><rect x="1371.78" y="1774.94" width="2.70" height="11.51" fill="#FF9830"/><rect x="1371.78" y="1786.45" width="2.70" height="46.05" fill="#73BF69"/><rect x="1371.78" y="1831.60" width="2.70" height="1.80" fill="#B877D9"/><rect x="1376.60" y="1761.03" width="2.70" height="14.29" fill="#FF9830"/><rect x="1376.60" y="1775.32" width="2.70" height="57.18" fill="#73BF69"/><rect x="1376.60" y="1831.60" width="2.70" height="1.80" fill="#B877D9"/><rect x="1381.42" y="1754.07" width="2.70" height="15.69" fill="#FF9830"/><rect x="1381.42" y="1769.75" width="2.70" height="62.75" fill="#73BF69"/><rect x="1381.42" y="1831.60" width="2.70" height="1.80" fill="#B877D9"/><rect x="1386.24" y="1765.88" width="2.70" height="13.32" fill="#FF9830"/><rect x="1386.24" y="1779.20" width="2.70" height="53.30" fill="#73BF69"/><rect x="1386.24" y="1831.60" width="2.70" height="1.80" fill="#B877D9"/><rect x="1391.06" y="1774.94" width="2.70" height="11.51" fill="#FF9830"/><rect x="1391.06" y="1786.45" width="2.70" height="46.05" fill="#73BF69"/><rect x="1391.06" y="1831.60" width="2.70" height="1.80" fill="#B877D9"/><rect x="1395.88" y="1792.02" width="2.70" height="8.10" fill="#FF9830"/><rect x="1395.88" y="1800.12" width="2.70" height="32.38" fill="#73BF69"/><rect x="1395.88" y="1831.60" width="2.70" height="1.80" fill="#B877D9"/><rect x="1400.70" y="1806.99" width="2.70" height="5.10" fill="#FF9830"/><rect x="1400.70" y="1812.09" width="2.70" height="20.41" fill="#73BF69"/><rect x="1400.70" y="1831.60" width="2.70" height="1.80" fill="#B877D9"/><rect x="1405.52" y="1824.07" width="2.70" height="1.69" fill="#FF9830"/><rect x="1405.52" y="1825.75" width="2.70" height="6.75" fill="#73BF69"/><rect x="1405.52" y="1831.60" width="2.70" height="1.80" fill="#B877D9"/><rect x="1410.34" y="1831.60" width="2.70" height="1.80" fill="#B877D9"/><rect x="1415.16" y="1831.60" width="2.70" height="1.80" fill="#B877D9"/><rect x="1419.98" y="1831.60" width="2.70" height="1.80" fill="#B877D9"/><rect x="1424.80" y="1831.60" width="2.70" height="1.80" fill="#B877D9"/><rect x="1429.62" y="1831.60" width="2.70" height="1.80" fill="#B877D9"/><rect x="1434.44" y="1831.60" width="2.70" height="1.80" fill="#B877D9"/><rect x="1439.26" y="1813.95" width="2.70" height="3.71" fill="#FF9830"/><rect x="1439.26" y="1817.66" width="2.70" height="14.84" fill="#73BF69"/><rect x="1439.26" y="1831.60" width="2.70" height="1.80" fill="#B877D9"/><rect x="1444.09" y="1785.91" width="2.70" height="9.32" fill="#FF9830"/><rect x="1444.09" y="1795.22" width="2.70" height="37.28" fill="#73BF69"/><rect x="1444.09" y="1831.60" width="2.70" height="1.80" fill="#B877D9"/><rect x="1448.91" y="1762.92" width="2.70" height="13.92" fill="#FF9830"/><rect x="1448.91" y="1776.84" width="2.70" height="55.66" fill="#73BF69"/><rect x="1448.91" y="1831.60" width="2.70" height="1.80" fill="#B877D9"/><rect x="1453.73" y="1759.97" width="2.70" height="14.51" fill="#FF9830"/><rect x="1453.73" y="1774.48" width="2.70" height="58.02" fill="#73BF69"/><rect x="1453.73" y="1831.60" width="2.70" height="1.80" fill="#B877D9"/><rect x="1458.55" y="1761.87" width="2.70" height="14.13" fill="#FF9830"/><rect x="1458.55" y="1776.00" width="2.70" height="56.50" fill="#73BF69"/><rect x="1458.55" y="1831.60" width="2.70" height="1.80" fill="#B877D9"/><rect x="1463.37" y="1757.02" width="2.70" height="15.10" fill="#FF9830"/><rect x="1463.37" y="1772.12" width="2.70" height="60.38" fill="#73BF69"/><rect x="1463.37" y="1831.60" width="2.70" height="1.80" fill="#B877D9"/><rect x="1468.19" y="1762.92" width="2.70" height="13.92" fill="#FF9830"/><rect x="1468.19" y="1776.84" width="2.70" height="55.66" fill="#73BF69"/><rect x="1468.19" y="1831.60" width="2.70" height="1.80" fill="#B877D9"/><rect x="1473.01" y="1769.88" width="2.70" height="12.52" fill="#FF9830"/><rect x="1473.01" y="1782.41" width="2.70" height="50.09" fill="#73BF69"/><rect x="1473.01" y="1831.60" width="2.70" height="1.80" fill="#B877D9"/><rect x="1477.83" y="1777.05" width="2.70" height="11.09" fill="#FF9830"/><rect x="1477.83" y="1788.14" width="2.70" height="44.36" fill="#73BF69"/><rect x="1477.83" y="1831.60" width="2.70" height="1.80" fill="#B877D9"/><rect x="1482.65" y="1769.88" width="2.70" height="12.52" fill="#FF9830"/><rect x="1482.65" y="1782.41" width="2.70" height="50.09" fill="#73BF69"/><rect x="1482.65" y="1831.60" width="2.70" height="1.80" fill="#B877D9"/><rect x="1487.47" y="1771.99" width="2.70" height="12.10" fill="#FF9830"/><rect x="1487.47" y="1784.09" width="2.70" height="48.41" fill="#73BF69"/><rect x="1487.47" y="1831.60" width="2.70" height="1.80" fill="#B877D9"/><rect x="1492.29" y="1786.96" width="2.70" height="9.11" fill="#FF9830"/><rect x="1492.29" y="1796.07" width="2.70" height="36.43" fill="#73BF69"/><rect x="1492.29" y="1831.60" width="2.70" height="1.80" fill="#B877D9"/><rect x="1497.11" y="1808.89" width="2.70" height="4.72" fill="#FF9830"/><rect x="1497.11" y="1813.61" width="2.70" height="18.89" fill="#73BF69"/><rect x="1497.11" y="1831.60" width="2.70" height="1.80" fill="#B877D9"/><rect x="1501.93" y="1824.91" width="2.70" height="1.52" fill="#FF9830"/><rect x="1501.93" y="1826.43" width="2.70" height="6.07" fill="#73BF69"/><rect x="1501.93" y="1831.60" width="2.70" height="1.80" fill="#B877D9"/><rect x="1506.75" y="1831.60" width="2.70" height="1.80" fill="#B877D9"/><rect x="1511.57" y="1831.60" width="2.70" height="1.80" fill="#B877D9"/><rect x="1516.39" y="1831.60" width="2.70" height="1.80" fill="#B877D9"/><rect x="1521.21" y="1831.60" width="2.70" height="1.80" fill="#B877D9"/><rect x="1526.03" y="1831.60" width="2.70" height="1.80" fill="#B877D9"/><rect x="1530.85" y="1831.60" width="2.70" height="1.80" fill="#B877D9"/><rect x="1535.67" y="1816.90" width="2.70" height="3.12" fill="#FF9830"/><rect x="1535.67" y="1820.02" width="2.70" height="12.48" fill="#73BF69"/><rect x="1535.67" y="1831.60" width="2.70" height="1.80" fill="#B877D9"/><rect x="1540.50" y="1796.03" width="2.70" height="7.29" fill="#FF9830"/><rect x="1540.50" y="1803.32" width="2.70" height="29.18" fill="#73BF69"/><rect x="1540.50" y="1831.60" width="2.70" height="1.80" fill="#B877D9"/><rect x="1545.32" y="1778.95" width="2.70" height="10.71" fill="#FF9830"/><rect x="1545.32" y="1789.66" width="2.70" height="42.84" fill="#73BF69"/><rect x="1545.32" y="1831.60" width="2.70" height="1.80" fill="#B877D9"/><rect x="1550.14" y="1776.00" width="2.70" height="11.30" fill="#FF9830"/><rect x="1550.14" y="1787.30" width="2.70" height="45.20" fill="#73BF69"/><rect x="1550.14" y="1831.60" width="2.70" height="1.80" fill="#B877D9"/><rect x="1554.96" y="1777.05" width="2.70" height="11.09" fill="#FF9830"/><rect x="1554.96" y="1788.14" width="2.70" height="44.36" fill="#73BF69"/><rect x="1554.96" y="1831.60" width="2.70" height="1.80" fill="#B877D9"/><rect x="1559.78" y="1780.00" width="2.70" height="10.50" fill="#FF9830"/><rect x="1559.78" y="1790.50" width="2.70" height="42.00" fill="#73BF69"/><rect x="1559.78" y="1831.60" width="2.70" height="1.80" fill="#B877D9"/><rect x="1564.60" y="1781.90" width="2.70" height="10.12" fill="#FF9830"/><rect x="1564.60" y="1792.02" width="2.70" height="40.48" fill="#73BF69"/><rect x="1564.60" y="1831.60" width="2.70" height="1.80" fill="#B877D9"/><rect x="1569.42" y="1788.01" width="2.70" height="8.90" fill="#FF9830"/><rect x="1569.42" y="1796.91" width="2.70" height="35.59" fill="#73BF69"/><rect x="1569.42" y="1831.60" width="2.70" height="1.80" fill="#B877D9"/><rect x="1574.24" y="1785.91" width="2.70" height="9.32" fill="#FF9830"/><rect x="1574.24" y="1795.22" width="2.70" height="37.28" fill="#73BF69"/><rect x="1574.24" y="1831.60" width="2.70" height="1.80" fill="#B877D9"/><rect x="1579.06" y="1780.84" width="2.70" height="10.33" fill="#FF9830"/><rect x="1579.06" y="1791.18" width="2.70" height="41.32" fill="#73BF69"/><rect x="1579.06" y="1831.60" width="2.70" height="1.80" fill="#B877D9"/><rect x="1583.88" y="1769.04" width="2.70" height="12.69" fill="#FF9830"/><rect x="1583.88" y="1781.73" width="2.70" height="50.77" fill="#73BF69"/><rect x="1583.88" y="1831.60" width="2.70" height="1.80" fill="#B877D9"/><rect x="1588.70" y="1777.89" width="2.70" height="10.92" fill="#FF9830"/><rect x="1588.70" y="1788.81" width="2.70" height="43.69" fill="#73BF69"/><rect x="1588.70" y="1831.60" width="2.70" height="1.80" fill="#B877D9"/><rect x="1593.52" y="1797.92" width="2.70" height="6.92" fill="#FF9830"/><rect x="1593.52" y="1804.84" width="2.70" height="27.66" fill="#73BF69"/><rect x="1593.52" y="1831.60" width="2.70" height="1.80" fill="#B877D9"/><rect x="1598.34" y="1824.07" width="2.70" height="1.69" fill="#FF9830"/><rect x="1598.34" y="1825.75" width="2.70" height="6.75" fill="#73BF69"/><rect x="1598.34" y="1831.60" width="2.70" height="1.80" fill="#B877D9"/><rect x="1603.16" y="1831.60" width="2.70" height="1.80" fill="#B877D9"/><rect x="1607.98" y="1831.60" width="2.70" height="1.80" fill="#B877D9"/><rect x="1612.80" y="1831.60" width="2.70" height="1.80" fill="#B877D9"/><rect x="1617.62" y="1831.60" width="2.70" height="1.80" fill="#B877D9"/><rect x="1622.44" y="1831.60" width="2.70" height="1.80" fill="#B877D9"/><rect x="1627.26" y="1831.60" width="2.70" height="1.80" fill="#B877D9"/><rect x="1632.08" y="1815.00" width="2.70" height="3.50" fill="#FF9830"/><rect x="1632.08" y="1818.50" width="2.70" height="14.00" fill="#73BF69"/><rect x="1632.08" y="1831.60" width="2.70" height="1.80" fill="#B877D9"/><rect x="1636.91" y="1790.97" width="2.70" height="8.31" fill="#FF9830"/><rect x="1636.91" y="1799.27" width="2.70" height="33.23" fill="#73BF69"/><rect x="1636.91" y="1831.60" width="2.70" height="1.80" fill="#B877D9"/><rect x="1641.73" y="1778.95" width="2.70" height="10.71" fill="#FF9830"/><rect x="1641.73" y="1789.66" width="2.70" height="42.84" fill="#73BF69"/><rect x="1641.73" y="1831.60" width="2.70" height="1.80" fill="#B877D9"/><rect x="1646.55" y="1785.91" width="2.70" height="9.32" fill="#FF9830"/><rect x="1646.55" y="1795.22" width="2.70" height="37.28" fill="#73BF69"/><rect x="1646.55" y="1831.60" width="2.70" height="1.80" fill="#B877D9"/><rect x="1651.37" y="1803.83" width="2.70" height="5.73" fill="#FF9830"/><rect x="1651.37" y="1809.56" width="2.70" height="22.94" fill="#73BF69"/><rect x="1651.37" y="1831.60" width="2.70" height="1.80" fill="#B877D9"/><rect x="1656.19" y="1805.93" width="2.70" height="5.31" fill="#FF9830"/><rect x="1656.19" y="1811.25" width="2.70" height="21.25" fill="#73BF69"/><rect x="1656.19" y="1831.60" width="2.70" height="1.80" fill="#B877D9"/><rect x="1661.01" y="1797.92" width="2.70" height="6.92" fill="#FF9830"/><rect x="1661.01" y="1804.84" width="2.70" height="27.66" fill="#73BF69"/><rect x="1661.01" y="1831.60" width="2.70" height="1.80" fill="#B877D9"/><rect x="1665.83" y="1784.01" width="2.70" height="9.70" fill="#FF9830"/><rect x="1665.83" y="1793.71" width="2.70" height="38.79" fill="#73BF69"/><rect x="1665.83" y="1831.60" width="2.70" height="1.80" fill="#B877D9"/><rect x="1670.65" y="1777.05" width="2.70" height="11.09" fill="#FF9830"/><rect x="1670.65" y="1788.14" width="2.70" height="44.36" fill="#73BF69"/><rect x="1670.65" y="1831.60" width="2.70" height="1.80" fill="#B877D9"/><rect x="1675.47" y="1777.05" width="2.70" height="11.09" fill="#FF9830"/><rect x="1675.47" y="1788.14" width="2.70" height="44.36" fill="#73BF69"/><rect x="1675.47" y="1831.60" width="2.70" height="1.80" fill="#B877D9"/><rect x="1680.29" y="1778.95" width="2.70" height="10.71" fill="#FF9830"/><rect x="1680.29" y="1789.66" width="2.70" height="42.84" fill="#73BF69"/><rect x="1680.29" y="1831.60" width="2.70" height="1.80" fill="#B877D9"/><rect x="1685.11" y="1793.92" width="2.70" height="7.72" fill="#FF9830"/><rect x="1685.11" y="1801.63" width="2.70" height="30.87" fill="#73BF69"/><rect x="1685.11" y="1831.60" width="2.70" height="1.80" fill="#B877D9"/><rect x="1689.93" y="1811.84" width="2.70" height="4.13" fill="#FF9830"/><rect x="1689.93" y="1815.97" width="2.70" height="16.53" fill="#73BF69"/><rect x="1689.93" y="1831.60" width="2.70" height="1.80" fill="#B877D9"/><rect x="1694.75" y="1829.13" width="2.70" height="0.67" fill="#FF9830"/><rect x="1694.75" y="1829.80" width="2.70" height="2.70" fill="#73BF69"/><rect x="1694.75" y="1831.60" width="2.70" height="1.80" fill="#B877D9"/><rect x="1699.57" y="1831.60" width="2.70" height="1.80" fill="#B877D9"/><rect x="1704.39" y="1831.60" width="2.70" height="1.80" fill="#B877D9"/><rect x="1709.21" y="1831.60" width="2.70" height="1.80" fill="#B877D9"/><rect x="1714.03" y="1831.60" width="2.70" height="1.80" fill="#B877D9"/><rect x="1718.85" y="1831.60" width="2.70" height="1.80" fill="#B877D9"/><rect x="1723.67" y="1831.60" width="2.70" height="1.80" fill="#B877D9"/><rect x="1728.49" y="1815.00" width="2.70" height="3.50" fill="#FF9830"/><rect x="1728.49" y="1818.50" width="2.70" height="14.00" fill="#73BF69"/><rect x="1728.49" y="1831.60" width="2.70" height="1.80" fill="#B877D9"/><rect x="1733.32" y="1796.03" width="2.70" height="7.29" fill="#FF9830"/><rect x="1733.32" y="1803.32" width="2.70" height="29.18" fill="#73BF69"/><rect x="1733.32" y="1831.60" width="2.70" height="1.80" fill="#B877D9"/><rect x="1738.14" y="1771.99" width="2.70" height="12.10" fill="#FF9830"/><rect x="1738.14" y="1784.09" width="2.70" height="48.41" fill="#73BF69"/><rect x="1738.14" y="1831.60" width="2.70" height="1.80" fill="#B877D9"/><rect x="1742.96" y="1763.98" width="2.70" height="13.70" fill="#FF9830"/><rect x="1742.96" y="1777.68" width="2.70" height="54.82" fill="#73BF69"/><rect x="1742.96" y="1831.60" width="2.70" height="1.80" fill="#B877D9"/><rect x="1747.78" y="1763.98" width="2.70" height="13.70" fill="#FF9830"/><rect x="1747.78" y="1777.68" width="2.70" height="54.82" fill="#73BF69"/><rect x="1747.78" y="1831.60" width="2.70" height="1.80" fill="#B877D9"/><rect x="1752.60" y="1778.95" width="2.70" height="10.71" fill="#FF9830"/><rect x="1752.60" y="1789.66" width="2.70" height="42.84" fill="#73BF69"/><rect x="1752.60" y="1831.60" width="2.70" height="1.80" fill="#B877D9"/><rect x="1757.42" y="1785.06" width="2.70" height="9.49" fill="#FF9830"/><rect x="1757.42" y="1794.55" width="2.70" height="37.95" fill="#73BF69"/><rect x="1757.42" y="1831.60" width="2.70" height="1.80" fill="#B877D9"/><rect x="1762.24" y="1780.84" width="2.70" height="10.33" fill="#FF9830"/><rect x="1762.24" y="1791.18" width="2.70" height="41.32" fill="#73BF69"/><rect x="1762.24" y="1831.60" width="2.70" height="1.80" fill="#B877D9"/><rect x="1767.06" y="1776.00" width="2.70" height="11.30" fill="#FF9830"/><rect x="1767.06" y="1787.30" width="2.70" height="45.20" fill="#73BF69"/><rect x="1767.06" y="1831.60" width="2.70" height="1.80" fill="#B877D9"/><rect x="1771.88" y="1782.95" width="2.70" height="9.91" fill="#FF9830"/><rect x="1771.88" y="1792.86" width="2.70" height="39.64" fill="#73BF69"/><rect x="1771.88" y="1831.60" width="2.70" height="1.80" fill="#B877D9"/><rect x="1776.70" y="1789.91" width="2.70" height="8.52" fill="#FF9830"/><rect x="1776.70" y="1798.43" width="2.70" height="34.07" fill="#73BF69"/><rect x="1776.70" y="1831.60" width="2.70" height="1.80" fill="#B877D9"/><rect x="1781.52" y="1789.07" width="2.70" height="8.69" fill="#FF9830"/><rect x="1781.52" y="1797.75" width="2.70" height="34.75" fill="#73BF69"/><rect x="1781.52" y="1831.60" width="2.70" height="1.80" fill="#B877D9"/><rect x="1786.34" y="1800.87" width="2.70" height="6.33" fill="#FF9830"/><rect x="1786.34" y="1807.20" width="2.70" height="25.30" fill="#73BF69"/><rect x="1786.34" y="1831.60" width="2.70" height="1.80" fill="#B877D9"/><rect x="1791.16" y="1816.90" width="2.70" height="3.12" fill="#FF9830"/><rect x="1791.16" y="1820.02" width="2.70" height="12.48" fill="#73BF69"/><rect x="1791.16" y="1831.60" width="2.70" height="1.80" fill="#B877D9"/><rect x="1795.98" y="1831.60" width="2.70" height="1.80" fill="#B877D9"/><rect x="1800.80" y="1831.60" width="2.70" height="1.80" fill="#B877D9"/><rect x="1805.62" y="1831.60" width="2.70" height="1.80" fill="#B877D9"/><rect x="1810.44" y="1831.60" width="2.70" height="1.80" fill="#B877D9"/><rect x="1815.26" y="1831.60" width="2.70" height="1.80" fill="#B877D9"/><rect x="1820.08" y="1831.60" width="2.70" height="1.80" fill="#B877D9"/><rect x="1824.90" y="1831.60" width="2.70" height="1.80" fill="#B877D9"/><rect x="1829.73" y="1816.05" width="2.70" height="3.29" fill="#FF9830"/><rect x="1829.73" y="1819.34" width="2.70" height="13.16" fill="#73BF69"/><rect x="1829.73" y="1831.60" width="2.70" height="1.80" fill="#B877D9"/><rect x="1834.55" y="1796.03" width="2.70" height="7.29" fill="#FF9830"/><rect x="1834.55" y="1803.32" width="2.70" height="29.18" fill="#73BF69"/><rect x="1834.55" y="1831.60" width="2.70" height="1.80" fill="#B877D9"/><rect x="1839.37" y="1782.95" width="2.70" height="9.91" fill="#FF9830"/><rect x="1839.37" y="1792.86" width="2.70" height="39.64" fill="#73BF69"/><rect x="1839.37" y="1831.60" width="2.70" height="1.80" fill="#B877D9"/><rect x="1844.19" y="1780.84" width="2.70" height="10.33" fill="#FF9830"/><rect x="1844.19" y="1791.18" width="2.70" height="41.32" fill="#73BF69"/><rect x="1844.19" y="1831.60" width="2.70" height="1.80" fill="#B877D9"/><rect x="1849.01" y="1780.84" width="2.70" height="10.33" fill="#FF9830"/><rect x="1849.01" y="1791.18" width="2.70" height="41.32" fill="#73BF69"/><rect x="1849.01" y="1831.60" width="2.70" height="1.80" fill="#B877D9"/><rect x="1853.83" y="1774.94" width="2.70" height="11.51" fill="#FF9830"/><rect x="1853.83" y="1786.45" width="2.70" height="46.05" fill="#73BF69"/><rect x="1853.83" y="1831.60" width="2.70" height="1.80" fill="#B877D9"/><rect x="1858.65" y="1771.99" width="2.70" height="12.10" fill="#FF9830"/><rect x="1858.65" y="1784.09" width="2.70" height="48.41" fill="#73BF69"/><rect x="1858.65" y="1831.60" width="2.70" height="1.80" fill="#B877D9"/><rect x="1863.47" y="1770.94" width="2.70" height="12.31" fill="#FF9830"/><rect x="1863.47" y="1783.25" width="2.70" height="49.25" fill="#73BF69"/><rect x="1863.47" y="1831.60" width="2.70" height="1.80" fill="#B877D9"/><rect x="1868.29" y="1776.00" width="2.70" height="11.30" fill="#FF9830"/><rect x="1868.29" y="1787.30" width="2.70" height="45.20" fill="#73BF69"/><rect x="1868.29" y="1831.60" width="2.70" height="1.80" fill="#B877D9"/><rect x="1873.11" y="1777.89" width="2.70" height="10.92" fill="#FF9830"/><rect x="1873.11" y="1788.81" width="2.70" height="43.69" fill="#73BF69"/><rect x="1873.11" y="1831.60" width="2.70" height="1.80" fill="#B877D9"/><rect x="1877.93" y="1782.95" width="2.70" height="9.91" fill="#FF9830"/><rect x="1877.93" y="1792.86" width="2.70" height="39.64" fill="#73BF69"/><rect x="1877.93" y="1831.60" width="2.70" height="1.80" fill="#B877D9"/><rect x="1882.75" y="1788.01" width="2.70" height="8.90" fill="#FF9830"/><rect x="1882.75" y="1796.91" width="2.70" height="35.59" fill="#73BF69"/><rect x="1882.75" y="1831.60" width="2.70" height="1.80" fill="#B877D9"/><rect x="1887.57" y="1805.93" width="2.70" height="5.31" fill="#FF9830"/><rect x="1887.57" y="1811.25" width="2.70" height="21.25" fill="#73BF69"/><rect x="1887.57" y="1831.60" width="2.70" height="1.80" fill="#B877D9"/><rect x="1892.39" y="1823.01" width="2.70" height="1.90" fill="#FF9830"/><rect x="1892.39" y="1824.91" width="2.70" height="7.59" fill="#73BF69"/><rect x="1892.39" y="1831.60" width="2.70" height="1.80" fill="#B877D9"/><rect x="1897.21" y="1831.60" width="2.70" height="1.80" fill="#B877D9"/><rect x="1902.03" y="1831.60" width="2.70" height="1.80" fill="#B877D9"/><rect x="1906.85" y="1831.60" width="2.70" height="1.80" fill="#B877D9"/><rect x="1911.67" y="1831.60" width="2.70" height="1.80" fill="#B877D9"/><rect x="1916.49" y="1831.60" width="2.70" height="1.80" fill="#B877D9"/><rect x="1921.31" y="1813.95" width="2.70" height="3.71" fill="#FF9830"/><rect x="1921.31" y="1817.66" width="2.70" height="14.84" fill="#73BF69"/><rect x="1921.31" y="1831.60" width="2.70" height="1.80" fill="#B877D9"/><rect x="1926.14" y="1792.86" width="2.70" height="7.93" fill="#FF9830"/><rect x="1926.14" y="1800.79" width="2.70" height="31.71" fill="#73BF69"/><rect x="1926.14" y="1831.60" width="2.70" height="1.80" fill="#B877D9"/><rect x="1930.96" y="1773.04" width="2.70" height="11.89" fill="#FF9830"/><rect x="1930.96" y="1784.94" width="2.70" height="47.56" fill="#73BF69"/><rect x="1930.96" y="1831.60" width="2.70" height="1.80" fill="#B877D9"/><rect x="1935.78" y="1769.88" width="2.70" height="12.52" fill="#FF9830"/><rect x="1935.78" y="1782.41" width="2.70" height="50.09" fill="#73BF69"/><rect x="1935.78" y="1831.60" width="2.70" height="1.80" fill="#B877D9"/><rect x="1940.60" y="1769.88" width="2.70" height="12.52" fill="#FF9830"/><rect x="1940.60" y="1782.41" width="2.70" height="50.09" fill="#73BF69"/><rect x="1940.60" y="1831.60" width="2.70" height="1.80" fill="#B877D9"/><rect x="1945.42" y="1769.04" width="2.70" height="12.69" fill="#FF9830"/><rect x="1945.42" y="1781.73" width="2.70" height="50.77" fill="#73BF69"/><rect x="1945.42" y="1831.60" width="2.70" height="1.80" fill="#B877D9"/><rect x="1950.24" y="1773.89" width="2.70" height="11.72" fill="#FF9830"/><rect x="1950.24" y="1785.61" width="2.70" height="46.89" fill="#73BF69"/><rect x="1950.24" y="1831.60" width="2.70" height="1.80" fill="#B877D9"/><rect x="1955.06" y="1773.89" width="2.70" height="11.72" fill="#FF9830"/><rect x="1955.06" y="1785.61" width="2.70" height="46.89" fill="#73BF69"/><rect x="1955.06" y="1831.60" width="2.70" height="1.80" fill="#B877D9"/><rect x="1959.88" y="1776.00" width="2.70" height="11.30" fill="#FF9830"/><rect x="1959.88" y="1787.30" width="2.70" height="45.20" fill="#73BF69"/><rect x="1959.88" y="1831.60" width="2.70" height="1.80" fill="#B877D9"/><rect x="1964.70" y="1769.04" width="2.70" height="12.69" fill="#FF9830"/><rect x="1964.70" y="1781.73" width="2.70" height="50.77" fill="#73BF69"/><rect x="1964.70" y="1831.60" width="2.70" height="1.80" fill="#B877D9"/><rect x="1969.52" y="1769.88" width="2.70" height="12.52" fill="#FF9830"/><rect x="1969.52" y="1782.41" width="2.70" height="50.09" fill="#73BF69"/><rect x="1969.52" y="1831.60" width="2.70" height="1.80" fill="#B877D9"/><rect x="1974.34" y="1776.00" width="2.70" height="11.30" fill="#FF9830"/><rect x="1974.34" y="1787.30" width="2.70" height="45.20" fill="#73BF69"/><rect x="1974.34" y="1831.60" width="2.70" height="1.80" fill="#B877D9"/><rect x="1979.16" y="1799.82" width="2.70" height="6.54" fill="#FF9830"/><rect x="1979.16" y="1806.36" width="2.70" height="26.14" fill="#73BF69"/><rect x="1979.16" y="1831.60" width="2.70" height="1.80" fill="#B877D9"/><rect x="1983.98" y="1820.90" width="2.70" height="2.32" fill="#FF9830"/><rect x="1983.98" y="1823.22" width="2.70" height="9.28" fill="#73BF69"/><rect x="1983.98" y="1831.60" width="2.70" height="1.80" fill="#B877D9"/><rect x="1988.80" y="1831.60" width="2.70" height="1.80" fill="#B877D9"/><rect x="1993.62" y="1831.60" width="2.70" height="1.80" fill="#B877D9"/><rect x="1998.44" y="1831.60" width="2.70" height="1.80" fill="#B877D9"/><rect x="2003.26" y="1831.60" width="2.70" height="1.80" fill="#B877D9"/><rect x="2008.08" y="1831.60" width="2.70" height="1.80" fill="#B877D9"/><rect x="2012.90" y="1831.60" width="2.70" height="1.80" fill="#B877D9"/><rect x="2017.72" y="1827.02" width="2.70" height="1.10" fill="#FF9830"/><rect x="2017.72" y="1828.11" width="2.70" height="4.39" fill="#73BF69"/><rect x="2017.72" y="1831.60" width="2.70" height="1.80" fill="#B877D9"/><rect x="2022.55" y="1804.88" width="2.70" height="5.52" fill="#FF9830"/><rect x="2022.55" y="1810.40" width="2.70" height="22.10" fill="#73BF69"/><rect x="2022.55" y="1831.60" width="2.70" height="1.80" fill="#B877D9"/><rect x="2027.37" y="1782.95" width="2.70" height="9.91" fill="#FF9830"/><rect x="2027.37" y="1792.86" width="2.70" height="39.64" fill="#73BF69"/><rect x="2027.37" y="1831.60" width="2.70" height="1.80" fill="#B877D9"/><rect x="2032.19" y="1770.94" width="2.70" height="12.31" fill="#FF9830"/><rect x="2032.19" y="1783.25" width="2.70" height="49.25" fill="#73BF69"/><rect x="2032.19" y="1831.60" width="2.70" height="1.80" fill="#B877D9"/><rect x="2037.01" y="1769.88" width="2.70" height="12.52" fill="#FF9830"/><rect x="2037.01" y="1782.41" width="2.70" height="50.09" fill="#73BF69"/><rect x="2037.01" y="1831.60" width="2.70" height="1.80" fill="#B877D9"/><rect x="2041.83" y="1771.99" width="2.70" height="12.10" fill="#FF9830"/><rect x="2041.83" y="1784.09" width="2.70" height="48.41" fill="#73BF69"/><rect x="2041.83" y="1831.60" width="2.70" height="1.80" fill="#B877D9"/><rect x="2046.65" y="1763.98" width="2.70" height="13.70" fill="#FF9830"/><rect x="2046.65" y="1777.68" width="2.70" height="54.82" fill="#73BF69"/><rect x="2046.65" y="1831.60" width="2.70" height="1.80" fill="#B877D9"/><rect x="2051.47" y="1765.03" width="2.70" height="13.49" fill="#FF9830"/><rect x="2051.47" y="1778.53" width="2.70" height="53.97" fill="#73BF69"/><rect x="2051.47" y="1831.60" width="2.70" height="1.80" fill="#B877D9"/><rect x="2056.29" y="1763.98" width="2.70" height="13.70" fill="#FF9830"/><rect x="2056.29" y="1777.68" width="2.70" height="54.82" fill="#73BF69"/><rect x="2056.29" y="1831.60" width="2.70" height="1.80" fill="#B877D9"/><rect x="2061.11" y="1773.04" width="2.70" height="11.89" fill="#FF9830"/><rect x="2061.11" y="1784.94" width="2.70" height="47.56" fill="#73BF69"/><rect x="2061.11" y="1831.60" width="2.70" height="1.80" fill="#B877D9"/><rect x="2065.93" y="1780.00" width="2.70" height="10.50" fill="#FF9830"/><rect x="2065.93" y="1790.50" width="2.70" height="42.00" fill="#73BF69"/><rect x="2065.93" y="1831.60" width="2.70" height="1.80" fill="#B877D9"/><rect x="2070.75" y="1780.84" width="2.70" height="10.33" fill="#FF9830"/><rect x="2070.75" y="1791.18" width="2.70" height="41.32" fill="#73BF69"/><rect x="2070.75" y="1831.60" width="2.70" height="1.80" fill="#B877D9"/><rect x="2075.57" y="1797.08" width="2.70" height="7.08" fill="#FF9830"/><rect x="2075.57" y="1804.16" width="2.70" height="28.34" fill="#73BF69"/><rect x="2075.57" y="1831.60" width="2.70" height="1.80" fill="#B877D9"/><rect x="2080.39" y="1810.99" width="2.70" height="4.30" fill="#FF9830"/><rect x="2080.39" y="1815.30" width="2.70" height="17.20" fill="#73BF69"/><rect x="2080.39" y="1831.60" width="2.70" height="1.80" fill="#B877D9"/><rect x="2085.21" y="1831.60" width="2.70" height="1.80" fill="#B877D9"/><rect x="2090.03" y="1831.60" width="2.70" height="1.80" fill="#B877D9"/><rect x="2094.85" y="1831.60" width="2.70" height="1.80" fill="#B877D9"/><rect x="2099.67" y="1831.60" width="2.70" height="1.80" fill="#B877D9"/><rect x="2104.49" y="1831.60" width="2.70" height="1.80" fill="#B877D9"/><rect x="2109.31" y="1831.60" width="2.70" height="1.80" fill="#B877D9"/><rect x="2114.13" y="1813.95" width="2.70" height="3.71" fill="#FF9830"/><rect x="2114.13" y="1817.66" width="2.70" height="14.84" fill="#73BF69"/><rect x="2114.13" y="1831.60" width="2.70" height="1.80" fill="#B877D9"/><rect x="2118.95" y="1798.98" width="2.70" height="6.70" fill="#FF9830"/><rect x="2118.95" y="1805.68" width="2.70" height="26.82" fill="#73BF69"/><rect x="2118.95" y="1831.60" width="2.70" height="1.80" fill="#B877D9"/><rect x="2123.78" y="1780.84" width="2.70" height="10.33" fill="#FF9830"/><rect x="2123.78" y="1791.18" width="2.70" height="41.32" fill="#73BF69"/><rect x="2123.78" y="1831.60" width="2.70" height="1.80" fill="#B877D9"/><rect x="2128.60" y="1780.84" width="2.70" height="10.33" fill="#FF9830"/><rect x="2128.60" y="1791.18" width="2.70" height="41.32" fill="#73BF69"/><rect x="2128.60" y="1831.60" width="2.70" height="1.80" fill="#B877D9"/><rect x="2133.42" y="1774.94" width="2.70" height="11.51" fill="#FF9830"/><rect x="2133.42" y="1786.45" width="2.70" height="46.05" fill="#73BF69"/><rect x="2133.42" y="1831.60" width="2.70" height="1.80" fill="#B877D9"/><rect x="2138.24" y="1773.04" width="2.70" height="11.89" fill="#FF9830"/><rect x="2138.24" y="1784.94" width="2.70" height="47.56" fill="#73BF69"/><rect x="2138.24" y="1831.60" width="2.70" height="1.80" fill="#B877D9"/><rect x="2143.06" y="1770.94" width="2.70" height="12.31" fill="#FF9830"/><rect x="2143.06" y="1783.25" width="2.70" height="49.25" fill="#73BF69"/><rect x="2143.06" y="1831.60" width="2.70" height="1.80" fill="#B877D9"/><rect x="2147.88" y="1778.95" width="2.70" height="10.71" fill="#FF9830"/><rect x="2147.88" y="1789.66" width="2.70" height="42.84" fill="#73BF69"/><rect x="2147.88" y="1831.60" width="2.70" height="1.80" fill="#B877D9"/><rect x="2152.70" y="1780.00" width="2.70" height="10.50" fill="#FF9830"/><rect x="2152.70" y="1790.50" width="2.70" height="42.00" fill="#73BF69"/><rect x="2152.70" y="1831.60" width="2.70" height="1.80" fill="#B877D9"/><rect x="2157.52" y="1786.96" width="2.70" height="9.11" fill="#FF9830"/><rect x="2157.52" y="1796.07" width="2.70" height="36.43" fill="#73BF69"/><rect x="2157.52" y="1831.60" width="2.70" height="1.80" fill="#B877D9"/><rect x="2162.34" y="1782.95" width="2.70" height="9.91" fill="#FF9830"/><rect x="2162.34" y="1792.86" width="2.70" height="39.64" fill="#73BF69"/><rect x="2162.34" y="1831.60" width="2.70" height="1.80" fill="#B877D9"/><rect x="2167.16" y="1790.97" width="2.70" height="8.31" fill="#FF9830"/><rect x="2167.16" y="1799.27" width="2.70" height="33.23" fill="#73BF69"/><rect x="2167.16" y="1831.60" width="2.70" height="1.80" fill="#B877D9"/><rect x="2171.98" y="1804.88" width="2.70" height="5.52" fill="#FF9830"/><rect x="2171.98" y="1810.40" width="2.70" height="22.10" fill="#73BF69"/><rect x="2171.98" y="1831.60" width="2.70" height="1.80" fill="#B877D9"/><rect x="2176.80" y="1821.96" width="2.70" height="2.11" fill="#FF9830"/><rect x="2176.80" y="1824.07" width="2.70" height="8.43" fill="#73BF69"/><rect x="2176.80" y="1831.60" width="2.70" height="1.80" fill="#B877D9"/><rect x="2181.62" y="1831.60" width="2.70" height="1.80" fill="#B877D9"/><rect x="2186.44" y="1831.60" width="2.70" height="1.80" fill="#B877D9"/><rect x="2191.26" y="1831.60" width="2.70" height="1.80" fill="#B877D9"/><rect x="2196.08" y="1831.60" width="2.70" height="1.80" fill="#B877D9"/><rect x="2200.90" y="1831.60" width="2.70" height="1.80" fill="#B877D9"/><rect x="2205.72" y="1831.60" width="2.70" height="1.80" fill="#B877D9"/><rect x="2210.54" y="1810.99" width="2.70" height="4.30" fill="#FF9830"/><rect x="2210.54" y="1815.30" width="2.70" height="17.20" fill="#73BF69"/><rect x="2210.54" y="1831.60" width="2.70" height="1.80" fill="#B877D9"/><rect x="2215.37" y="1784.01" width="2.70" height="9.70" fill="#FF9830"/><rect x="2215.37" y="1793.71" width="2.70" height="38.79" fill="#73BF69"/><rect x="2215.37" y="1831.60" width="2.70" height="1.80" fill="#B877D9"/><rect x="2220.19" y="1761.87" width="2.70" height="14.13" fill="#FF9830"/><rect x="2220.19" y="1776.00" width="2.70" height="56.50" fill="#73BF69"/><rect x="2220.19" y="1831.60" width="2.70" height="1.80" fill="#B877D9"/><rect x="2225.01" y="1769.88" width="2.70" height="12.52" fill="#FF9830"/><rect x="2225.01" y="1782.41" width="2.70" height="50.09" fill="#73BF69"/><rect x="2225.01" y="1831.60" width="2.70" height="1.80" fill="#B877D9"/><rect x="2229.83" y="1776.00" width="2.70" height="11.30" fill="#FF9830"/><rect x="2229.83" y="1787.30" width="2.70" height="45.20" fill="#73BF69"/><rect x="2229.83" y="1831.60" width="2.70" height="1.80" fill="#B877D9"/><rect x="2234.65" y="1780.84" width="2.70" height="10.33" fill="#FF9830"/><rect x="2234.65" y="1791.18" width="2.70" height="41.32" fill="#73BF69"/><rect x="2234.65" y="1831.60" width="2.70" height="1.80" fill="#B877D9"/><rect x="2239.47" y="1769.04" width="2.70" height="12.69" fill="#FF9830"/><rect x="2239.47" y="1781.73" width="2.70" height="50.77" fill="#73BF69"/><rect x="2239.47" y="1831.60" width="2.70" height="1.80" fill="#B877D9"/><rect x="2244.29" y="1773.04" width="2.70" height="11.89" fill="#FF9830"/><rect x="2244.29" y="1784.94" width="2.70" height="47.56" fill="#73BF69"/><rect x="2244.29" y="1831.60" width="2.70" height="1.80" fill="#B877D9"/><rect x="2249.11" y="1774.94" width="2.70" height="11.51" fill="#FF9830"/><rect x="2249.11" y="1786.45" width="2.70" height="46.05" fill="#73BF69"/><rect x="2249.11" y="1831.60" width="2.70" height="1.80" fill="#B877D9"/><rect x="2253.93" y="1777.89" width="2.70" height="10.92" fill="#FF9830"/><rect x="2253.93" y="1788.81" width="2.70" height="43.69" fill="#73BF69"/><rect x="2253.93" y="1831.60" width="2.70" height="1.80" fill="#B877D9"/><rect x="2258.75" y="1777.05" width="2.70" height="11.09" fill="#FF9830"/><rect x="2258.75" y="1788.14" width="2.70" height="44.36" fill="#73BF69"/><rect x="2258.75" y="1831.60" width="2.70" height="1.80" fill="#B877D9"/><rect x="2263.57" y="1780.84" width="2.70" height="10.33" fill="#FF9830"/><rect x="2263.57" y="1791.18" width="2.70" height="41.32" fill="#73BF69"/><rect x="2263.57" y="1831.60" width="2.70" height="1.80" fill="#B877D9"/><rect x="2268.39" y="1800.87" width="2.70" height="6.33" fill="#FF9830"/><rect x="2268.39" y="1807.20" width="2.70" height="25.30" fill="#73BF69"/><rect x="2268.39" y="1831.60" width="2.70" height="1.80" fill="#B877D9"/><rect x="2273.21" y="1820.06" width="2.70" height="2.49" fill="#FF9830"/><rect x="2273.21" y="1822.55" width="2.70" height="9.95" fill="#73BF69"/><rect x="2273.21" y="1831.60" width="2.70" height="1.80" fill="#B877D9"/><rect x="2278.03" y="1831.60" width="2.70" height="1.80" fill="#B877D9"/><rect x="2282.85" y="1831.60" width="2.70" height="1.80" fill="#B877D9"/><rect x="2287.67" y="1831.60" width="2.70" height="1.80" fill="#B877D9"/><rect x="2292.49" y="1831.60" width="2.70" height="1.80" fill="#B877D9"/><rect x="2297.31" y="1831.60" width="2.70" height="1.80" fill="#B877D9"/><rect x="2302.13" y="1831.60" width="2.70" height="1.80" fill="#B877D9"/><rect x="2306.95" y="1815.00" width="2.70" height="3.50" fill="#FF9830"/><rect x="2306.95" y="1818.50" width="2.70" height="14.00" fill="#73BF69"/><rect x="2306.95" y="1831.60" width="2.70" height="1.80" fill="#B877D9"/><rect x="2311.78" y="1793.92" width="2.70" height="7.72" fill="#FF9830"/><rect x="2311.78" y="1801.63" width="2.70" height="30.87" fill="#73BF69"/><rect x="2311.78" y="1831.60" width="2.70" height="1.80" fill="#B877D9"/><rect x="2316.60" y="1767.98" width="2.70" height="12.90" fill="#FF9830"/><rect x="2316.60" y="1780.89" width="2.70" height="51.61" fill="#73BF69"/><rect x="2316.60" y="1831.60" width="2.70" height="1.80" fill="#B877D9"/><rect x="2321.42" y="1761.87" width="2.70" height="14.13" fill="#FF9830"/><rect x="2321.42" y="1776.00" width="2.70" height="56.50" fill="#73BF69"/><rect x="2321.42" y="1831.60" width="2.70" height="1.80" fill="#B877D9"/><rect x="2326.24" y="1759.97" width="2.70" height="14.51" fill="#FF9830"/><rect x="2326.24" y="1774.48" width="2.70" height="58.02" fill="#73BF69"/><rect x="2326.24" y="1831.60" width="2.70" height="1.80" fill="#B877D9"/><rect x="2331.06" y="1769.04" width="2.70" height="12.69" fill="#FF9830"/><rect x="2331.06" y="1781.73" width="2.70" height="50.77" fill="#73BF69"/><rect x="2331.06" y="1831.60" width="2.70" height="1.80" fill="#B877D9"/><rect x="2335.88" y="1771.99" width="2.70" height="12.10" fill="#FF9830"/><rect x="2335.88" y="1784.09" width="2.70" height="48.41" fill="#73BF69"/><rect x="2335.88" y="1831.60" width="2.70" height="1.80" fill="#B877D9"/><rect x="2340.70" y="1771.99" width="2.70" height="12.10" fill="#FF9830"/><rect x="2340.70" y="1784.09" width="2.70" height="48.41" fill="#73BF69"/><rect x="2340.70" y="1831.60" width="2.70" height="1.80" fill="#B877D9"/><rect x="2345.52" y="1776.00" width="2.70" height="11.30" fill="#FF9830"/><rect x="2345.52" y="1787.30" width="2.70" height="45.20" fill="#73BF69"/><rect x="2345.52" y="1831.60" width="2.70" height="1.80" fill="#B877D9"/><rect x="2350.34" y="1777.05" width="2.70" height="11.09" fill="#FF9830"/><rect x="2350.34" y="1788.14" width="2.70" height="44.36" fill="#73BF69"/><rect x="2350.34" y="1831.60" width="2.70" height="1.80" fill="#B877D9"/><rect x="2355.16" y="1774.94" width="2.70" height="11.51" fill="#FF9830"/><rect x="2355.16" y="1786.45" width="2.70" height="46.05" fill="#73BF69"/><rect x="2355.16" y="1831.60" width="2.70" height="1.80" fill="#B877D9"/><rect x="2359.98" y="1780.84" width="2.70" height="10.33" fill="#FF9830"/><rect x="2359.98" y="1791.18" width="2.70" height="41.32" fill="#73BF69"/><rect x="2359.98" y="1831.60" width="2.70" height="1.80" fill="#B877D9"/><rect x="2364.80" y="1799.82" width="2.70" height="6.54" fill="#FF9830"/><rect x="2364.80" y="1806.36" width="2.70" height="26.14" fill="#73BF69"/><rect x="2364.80" y="1831.60" width="2.70" height="1.80" fill="#B877D9"/><rect x="2369.62" y="1824.91" width="2.70" height="1.52" fill="#FF9830"/><rect x="2369.62" y="1826.43" width="2.70" height="6.07" fill="#73BF69"/><rect x="2369.62" y="1831.60" width="2.70" height="1.80" fill="#B877D9"/><rect x="2374.44" y="1831.60" width="2.70" height="1.80" fill="#B877D9"/><rect x="2379.26" y="1831.60" width="2.70" height="1.80" fill="#B877D9"/><rect x="2384.08" y="1831.60" width="2.70" height="1.80" fill="#B877D9"/><rect x="2388.90" y="1831.60" width="2.70" height="1.80" fill="#B877D9"/><rect x="2393.72" y="1831.60" width="2.70" height="1.80" fill="#B877D9"/><rect x="2398.54" y="1831.60" width="2.70" height="1.80" fill="#B877D9"/><rect x="2403.36" y="1821.96" width="2.70" height="2.11" fill="#FF9830"/><rect x="2403.36" y="1824.07" width="2.70" height="8.43" fill="#73BF69"/><rect x="2403.36" y="1831.60" width="2.70" height="1.80" fill="#B877D9"/><rect x="2408.19" y="1798.98" width="2.70" height="6.70" fill="#FF9830"/><rect x="2408.19" y="1805.68" width="2.70" height="26.82" fill="#73BF69"/><rect x="2408.19" y="1831.60" width="2.70" height="1.80" fill="#B877D9"/><rect x="2413.01" y="1773.89" width="2.70" height="11.72" fill="#FF9830"/><rect x="2413.01" y="1785.61" width="2.70" height="46.89" fill="#73BF69"/><rect x="2413.01" y="1831.60" width="2.70" height="1.80" fill="#B877D9"/><rect x="2417.83" y="1763.98" width="2.70" height="13.70" fill="#FF9830"/><rect x="2417.83" y="1777.68" width="2.70" height="54.82" fill="#73BF69"/><rect x="2417.83" y="1831.60" width="2.70" height="1.80" fill="#B877D9"/><rect x="2422.65" y="1773.04" width="2.70" height="11.89" fill="#FF9830"/><rect x="2422.65" y="1784.94" width="2.70" height="47.56" fill="#73BF69"/><rect x="2422.65" y="1831.60" width="2.70" height="1.80" fill="#B877D9"/><rect x="2427.47" y="1776.00" width="2.70" height="11.30" fill="#FF9830"/><rect x="2427.47" y="1787.30" width="2.70" height="45.20" fill="#73BF69"/><rect x="2427.47" y="1831.60" width="2.70" height="1.80" fill="#B877D9"/><rect x="2432.29" y="1769.88" width="2.70" height="12.52" fill="#FF9830"/><rect x="2432.29" y="1782.41" width="2.70" height="50.09" fill="#73BF69"/><rect x="2432.29" y="1831.60" width="2.70" height="1.80" fill="#B877D9"/><rect x="2437.11" y="1759.97" width="2.70" height="14.51" fill="#FF9830"/><rect x="2437.11" y="1774.48" width="2.70" height="58.02" fill="#73BF69"/><rect x="2437.11" y="1831.60" width="2.70" height="1.80" fill="#B877D9"/><rect x="2441.93" y="1753.01" width="2.70" height="15.90" fill="#FF9830"/><rect x="2441.93" y="1768.91" width="2.70" height="63.59" fill="#73BF69"/><rect x="2441.93" y="1831.60" width="2.70" height="1.80" fill="#B877D9"/><rect x="2446.75" y="1763.98" width="2.70" height="13.70" fill="#FF9830"/><rect x="2446.75" y="1777.68" width="2.70" height="54.82" fill="#73BF69"/><rect x="2446.75" y="1831.60" width="2.70" height="1.80" fill="#B877D9"/><rect x="2451.57" y="1761.87" width="2.70" height="14.13" fill="#FF9830"/><rect x="2451.57" y="1776.00" width="2.70" height="56.50" fill="#73BF69"/><rect x="2451.57" y="1831.60" width="2.70" height="1.80" fill="#B877D9"/><rect x="2456.39" y="1761.87" width="2.70" height="14.13" fill="#FF9830"/><rect x="2456.39" y="1776.00" width="2.70" height="56.50" fill="#73BF69"/><rect x="2456.39" y="1831.60" width="2.70" height="1.80" fill="#B877D9"/><rect x="2461.21" y="1774.94" width="2.70" height="11.51" fill="#FF9830"/><rect x="2461.21" y="1786.45" width="2.70" height="46.05" fill="#73BF69"/><rect x="2461.21" y="1831.60" width="2.70" height="1.80" fill="#B877D9"/><rect x="2466.03" y="1801.93" width="2.70" height="6.11" fill="#FF9830"/><rect x="2466.03" y="1808.04" width="2.70" height="24.46" fill="#73BF69"/><rect x="2466.03" y="1831.60" width="2.70" height="1.80" fill="#B877D9"/><rect x="2470.85" y="1831.02" width="2.70" height="1.48" fill="#73BF69"/><rect x="2470.85" y="1831.60" width="2.70" height="1.80" fill="#B877D9"/><rect x="2475.67" y="1831.60" width="2.70" height="1.80" fill="#B877D9"/><rect x="2480.49" y="1831.60" width="2.70" height="1.80" fill="#B877D9"/><rect x="2485.31" y="1831.60" width="2.70" height="1.80" fill="#B877D9"/><rect x="2490.13" y="1831.60" width="2.70" height="1.80" fill="#B877D9"/><rect x="2494.95" y="1831.60" width="2.70" height="1.80" fill="#B877D9"/><rect x="2499.77" y="1811.84" width="2.70" height="4.13" fill="#FF9830"/><rect x="2499.77" y="1815.97" width="2.70" height="16.53" fill="#73BF69"/><rect x="2499.77" y="1831.60" width="2.70" height="1.80" fill="#B877D9"/><rect x="2504.60" y="1792.86" width="2.70" height="7.93" fill="#FF9830"/><rect x="2504.60" y="1800.79" width="2.70" height="31.71" fill="#73BF69"/><rect x="2504.60" y="1831.60" width="2.70" height="1.80" fill="#B877D9"/><rect x="2509.42" y="1777.05" width="2.70" height="11.09" fill="#FF9830"/><rect x="2509.42" y="1788.14" width="2.70" height="44.36" fill="#73BF69"/><rect x="2509.42" y="1831.60" width="2.70" height="1.80" fill="#B877D9"/><rect x="2514.24" y="1780.00" width="2.70" height="10.50" fill="#FF9830"/><rect x="2514.24" y="1790.50" width="2.70" height="42.00" fill="#73BF69"/><rect x="2514.24" y="1831.60" width="2.70" height="1.80" fill="#B877D9"/><rect x="2519.06" y="1778.95" width="2.70" height="10.71" fill="#FF9830"/><rect x="2519.06" y="1789.66" width="2.70" height="42.84" fill="#73BF69"/><rect x="2519.06" y="1831.60" width="2.70" height="1.80" fill="#B877D9"/><rect x="2523.88" y="1769.88" width="2.70" height="12.52" fill="#FF9830"/><rect x="2523.88" y="1782.41" width="2.70" height="50.09" fill="#73BF69"/><rect x="2523.88" y="1831.60" width="2.70" height="1.80" fill="#B877D9"/><rect x="2528.70" y="1761.03" width="2.70" height="14.29" fill="#FF9830"/><rect x="2528.70" y="1775.32" width="2.70" height="57.18" fill="#73BF69"/><rect x="2528.70" y="1831.60" width="2.70" height="1.80" fill="#B877D9"/><rect x="2533.52" y="1754.91" width="2.70" height="15.52" fill="#FF9830"/><rect x="2533.52" y="1770.43" width="2.70" height="62.07" fill="#73BF69"/><rect x="2533.52" y="1831.60" width="2.70" height="1.80" fill="#B877D9"/><rect x="2538.34" y="1769.88" width="2.70" height="12.52" fill="#FF9830"/><rect x="2538.34" y="1782.41" width="2.70" height="50.09" fill="#73BF69"/><rect x="2538.34" y="1831.60" width="2.70" height="1.80" fill="#B877D9"/><rect x="2543.16" y="1776.00" width="2.70" height="11.30" fill="#FF9830"/><rect x="2543.16" y="1787.30" width="2.70" height="45.20" fill="#73BF69"/><rect x="2543.16" y="1831.60" width="2.70" height="1.80" fill="#B877D9"/><rect x="2547.98" y="1784.01" width="2.70" height="9.70" fill="#FF9830"/><rect x="2547.98" y="1793.71" width="2.70" height="38.79" fill="#73BF69"/><rect x="2547.98" y="1831.60" width="2.70" height="1.80" fill="#B877D9"/><rect x="2552.80" y="1780.84" width="2.70" height="10.33" fill="#FF9830"/><rect x="2552.80" y="1791.18" width="2.70" height="41.32" fill="#73BF69"/><rect x="2552.80" y="1831.60" width="2.70" height="1.80" fill="#B877D9"/><rect x="2557.62" y="1801.93" width="2.70" height="6.11" fill="#FF9830"/><rect x="2557.62" y="1808.04" width="2.70" height="24.46" fill="#73BF69"/><rect x="2557.62" y="1831.60" width="2.70" height="1.80" fill="#B877D9"/><rect x="2562.44" y="1820.06" width="2.70" height="2.49" fill="#FF9830"/><rect x="2562.44" y="1822.55" width="2.70" height="9.95" fill="#73BF69"/><rect x="2562.44" y="1831.60" width="2.70" height="1.80" fill="#B877D9"/><rect x="2567.26" y="1831.60" width="2.70" height="1.80" fill="#B877D9"/><rect x="2572.08" y="1831.60" width="2.70" height="1.80" fill="#B877D9"/><rect x="2576.90" y="1831.60" width="2.70" height="1.80" fill="#B877D9"/><rect x="2581.72" y="1831.60" width="2.70" height="1.80" fill="#B877D9"/><rect x="2586.54" y="1831.60" width="2.70" height="1.80" fill="#B877D9"/><rect x="2591.36" y="1831.60" width="2.70" height="1.80" fill="#B877D9"/><rect x="2596.18" y="1808.89" width="2.70" height="4.72" fill="#FF9830"/><rect x="2596.18" y="1813.61" width="2.70" height="18.89" fill="#73BF69"/><rect x="2596.18" y="1831.60" width="2.70" height="1.80" fill="#B877D9"/><rect x="2601.01" y="1784.01" width="2.70" height="9.70" fill="#FF9830"/><rect x="2601.01" y="1793.71" width="2.70" height="38.79" fill="#73BF69"/><rect x="2601.01" y="1831.60" width="2.70" height="1.80" fill="#B877D9"/><rect x="2605.83" y="1763.98" width="2.70" height="13.70" fill="#FF9830"/><rect x="2605.83" y="1777.68" width="2.70" height="54.82" fill="#73BF69"/><rect x="2605.83" y="1831.60" width="2.70" height="1.80" fill="#B877D9"/><rect x="2610.65" y="1769.04" width="2.70" height="12.69" fill="#FF9830"/><rect x="2610.65" y="1781.73" width="2.70" height="50.77" fill="#73BF69"/><rect x="2610.65" y="1831.60" width="2.70" height="1.80" fill="#B877D9"/><rect x="2615.47" y="1776.00" width="2.70" height="11.30" fill="#FF9830"/><rect x="2615.47" y="1787.30" width="2.70" height="45.20" fill="#73BF69"/><rect x="2615.47" y="1831.60" width="2.70" height="1.80" fill="#B877D9"/><rect x="2620.29" y="1784.01" width="2.70" height="9.70" fill="#FF9830"/><rect x="2620.29" y="1793.71" width="2.70" height="38.79" fill="#73BF69"/><rect x="2620.29" y="1831.60" width="2.70" height="1.80" fill="#B877D9"/><rect x="2625.11" y="1784.01" width="2.70" height="9.70" fill="#FF9830"/><rect x="2625.11" y="1793.71" width="2.70" height="38.79" fill="#73BF69"/><rect x="2625.11" y="1831.60" width="2.70" height="1.80" fill="#B877D9"/><rect x="2629.93" y="1781.90" width="2.70" height="10.12" fill="#FF9830"/><rect x="2629.93" y="1792.02" width="2.70" height="40.48" fill="#73BF69"/><rect x="2629.93" y="1831.60" width="2.70" height="1.80" fill="#B877D9"/><rect x="2634.75" y="1778.95" width="2.70" height="10.71" fill="#FF9830"/><rect x="2634.75" y="1789.66" width="2.70" height="42.84" fill="#73BF69"/><rect x="2634.75" y="1831.60" width="2.70" height="1.80" fill="#B877D9"/><rect x="2639.57" y="1777.05" width="2.70" height="11.09" fill="#FF9830"/><rect x="2639.57" y="1788.14" width="2.70" height="44.36" fill="#73BF69"/><rect x="2639.57" y="1831.60" width="2.70" height="1.80" fill="#B877D9"/><rect x="2644.39" y="1771.99" width="2.70" height="12.10" fill="#FF9830"/><rect x="2644.39" y="1784.09" width="2.70" height="48.41" fill="#73BF69"/><rect x="2644.39" y="1831.60" width="2.70" height="1.80" fill="#B877D9"/><rect x="2649.21" y="1774.94" width="2.70" height="11.51" fill="#FF9830"/><rect x="2649.21" y="1786.45" width="2.70" height="46.05" fill="#73BF69"/><rect x="2649.21" y="1831.60" width="2.70" height="1.80" fill="#B877D9"/><rect x="2654.03" y="1796.03" width="2.70" height="7.29" fill="#FF9830"/><rect x="2654.03" y="1803.32" width="2.70" height="29.18" fill="#73BF69"/><rect x="2654.03" y="1831.60" width="2.70" height="1.80" fill="#B877D9"/><rect x="2658.85" y="1819.01" width="2.70" height="2.70" fill="#FF9830"/><rect x="2658.85" y="1821.71" width="2.70" height="10.79" fill="#73BF69"/><rect x="2658.85" y="1831.60" width="2.70" height="1.80" fill="#B877D9"/><rect x="2663.67" y="1831.60" width="2.70" height="1.80" fill="#B877D9"/><rect x="2668.49" y="1831.60" width="2.70" height="1.80" fill="#B877D9"/><rect x="2673.31" y="1831.60" width="2.70" height="1.80" fill="#B877D9"/></svg>
<span class="t" style="top:1635.92px;font-size:23.60px;line-height:23.60px;color:rgb(204,204,220);right:2653.00px;text-align:right;">150000</span>
<span class="t" style="top:1696.92px;font-size:23.60px;line-height:23.60px;color:rgb(204,204,220);right:2653.00px;text-align:right;">100000</span>
<span class="t" style="top:1757.82px;font-size:23.60px;line-height:23.60px;color:rgb(204,204,220);right:2653.00px;text-align:right;">50000</span>
<span class="t" style="top:1818.92px;font-size:23.60px;line-height:23.60px;color:rgb(204,204,220);right:2653.00px;text-align:right;">0</span>
<div class="t" style="top:1849.02px;font-size:23.60px;line-height:23.60px;color:rgb(204,204,220);left:173.20px;width:0;display:flex;justify-content:center;"><span style="display:block;transform:scaleX(1.0416);transform-origin:50% 50%;">15:45</span></div>
<div class="t" style="top:1849.02px;font-size:23.60px;line-height:23.60px;color:rgb(204,204,220);left:269.60px;width:0;display:flex;justify-content:center;"><span style="display:block;transform:scaleX(1.0416);transform-origin:50% 50%;">15:50</span></div>
<div class="t" style="top:1849.02px;font-size:23.60px;line-height:23.60px;color:rgb(204,204,220);left:366.00px;width:0;display:flex;justify-content:center;"><span style="display:block;transform:scaleX(1.0416);transform-origin:50% 50%;">15:55</span></div>
<div class="t" style="top:1849.02px;font-size:23.60px;line-height:23.60px;color:rgb(204,204,220);left:462.40px;width:0;display:flex;justify-content:center;"><span style="display:block;transform:scaleX(1.0416);transform-origin:50% 50%;">16:00</span></div>
<div class="t" style="top:1849.02px;font-size:23.60px;line-height:23.60px;color:rgb(204,204,220);left:558.80px;width:0;display:flex;justify-content:center;"><span style="display:block;transform:scaleX(1.0416);transform-origin:50% 50%;">16:05</span></div>
<div class="t" style="top:1849.02px;font-size:23.60px;line-height:23.60px;color:rgb(204,204,220);left:655.20px;width:0;display:flex;justify-content:center;"><span style="display:block;transform:scaleX(1.0416);transform-origin:50% 50%;">16:10</span></div>
<div class="t" style="top:1849.02px;font-size:23.60px;line-height:23.60px;color:rgb(204,204,220);left:751.60px;width:0;display:flex;justify-content:center;"><span style="display:block;transform:scaleX(1.0416);transform-origin:50% 50%;">16:15</span></div>
<div class="t" style="top:1849.02px;font-size:23.60px;line-height:23.60px;color:rgb(204,204,220);left:848.00px;width:0;display:flex;justify-content:center;"><span style="display:block;transform:scaleX(1.0416);transform-origin:50% 50%;">16:20</span></div>
<div class="t" style="top:1849.02px;font-size:23.60px;line-height:23.60px;color:rgb(204,204,220);left:944.40px;width:0;display:flex;justify-content:center;"><span style="display:block;transform:scaleX(1.0416);transform-origin:50% 50%;">16:25</span></div>
<div class="t" style="top:1849.02px;font-size:23.60px;line-height:23.60px;color:rgb(204,204,220);left:1040.80px;width:0;display:flex;justify-content:center;"><span style="display:block;transform:scaleX(1.0416);transform-origin:50% 50%;">16:30</span></div>
<div class="t" style="top:1849.02px;font-size:23.60px;line-height:23.60px;color:rgb(204,204,220);left:1137.20px;width:0;display:flex;justify-content:center;"><span style="display:block;transform:scaleX(1.0416);transform-origin:50% 50%;">16:35</span></div>
<div class="t" style="top:1849.02px;font-size:23.60px;line-height:23.60px;color:rgb(204,204,220);left:1233.60px;width:0;display:flex;justify-content:center;"><span style="display:block;transform:scaleX(1.0416);transform-origin:50% 50%;">16:40</span></div>
<div class="t" style="top:1849.02px;font-size:23.60px;line-height:23.60px;color:rgb(204,204,220);left:1330.00px;width:0;display:flex;justify-content:center;"><span style="display:block;transform:scaleX(1.0416);transform-origin:50% 50%;">16:45</span></div>
<div class="t" style="top:1849.02px;font-size:23.60px;line-height:23.60px;color:rgb(204,204,220);left:1426.40px;width:0;display:flex;justify-content:center;"><span style="display:block;transform:scaleX(1.0416);transform-origin:50% 50%;">16:50</span></div>
<div class="t" style="top:1849.02px;font-size:23.60px;line-height:23.60px;color:rgb(204,204,220);left:1522.80px;width:0;display:flex;justify-content:center;"><span style="display:block;transform:scaleX(1.0416);transform-origin:50% 50%;">16:55</span></div>
<div class="t" style="top:1849.02px;font-size:23.60px;line-height:23.60px;color:rgb(204,204,220);left:1619.20px;width:0;display:flex;justify-content:center;"><span style="display:block;transform:scaleX(1.0416);transform-origin:50% 50%;">17:00</span></div>
<div class="t" style="top:1849.02px;font-size:23.60px;line-height:23.60px;color:rgb(204,204,220);left:1715.60px;width:0;display:flex;justify-content:center;"><span style="display:block;transform:scaleX(1.0416);transform-origin:50% 50%;">17:05</span></div>
<div class="t" style="top:1849.02px;font-size:23.60px;line-height:23.60px;color:rgb(204,204,220);left:1812.00px;width:0;display:flex;justify-content:center;"><span style="display:block;transform:scaleX(1.0416);transform-origin:50% 50%;">17:10</span></div>
<div class="t" style="top:1849.02px;font-size:23.60px;line-height:23.60px;color:rgb(204,204,220);left:1908.40px;width:0;display:flex;justify-content:center;"><span style="display:block;transform:scaleX(1.0416);transform-origin:50% 50%;">17:15</span></div>
<div class="t" style="top:1849.02px;font-size:23.60px;line-height:23.60px;color:rgb(204,204,220);left:2004.80px;width:0;display:flex;justify-content:center;"><span style="display:block;transform:scaleX(1.0416);transform-origin:50% 50%;">17:20</span></div>
<div class="t" style="top:1849.02px;font-size:23.60px;line-height:23.60px;color:rgb(204,204,220);left:2101.20px;width:0;display:flex;justify-content:center;"><span style="display:block;transform:scaleX(1.0416);transform-origin:50% 50%;">17:25</span></div>
<div class="t" style="top:1849.02px;font-size:23.60px;line-height:23.60px;color:rgb(204,204,220);left:2197.60px;width:0;display:flex;justify-content:center;"><span style="display:block;transform:scaleX(1.0416);transform-origin:50% 50%;">17:30</span></div>
<div class="t" style="top:1849.02px;font-size:23.60px;line-height:23.60px;color:rgb(204,204,220);left:2294.00px;width:0;display:flex;justify-content:center;"><span style="display:block;transform:scaleX(1.0416);transform-origin:50% 50%;">17:35</span></div>
<div class="t" style="top:1849.02px;font-size:23.60px;line-height:23.60px;color:rgb(204,204,220);left:2390.40px;width:0;display:flex;justify-content:center;"><span style="display:block;transform:scaleX(1.0416);transform-origin:50% 50%;">17:40</span></div>
<div class="t" style="top:1849.02px;font-size:23.60px;line-height:23.60px;color:rgb(204,204,220);left:2486.80px;width:0;display:flex;justify-content:center;"><span style="display:block;transform:scaleX(1.0416);transform-origin:50% 50%;">17:45</span></div>
<div class="t" style="top:1849.02px;font-size:23.60px;line-height:23.60px;color:rgb(204,204,220);left:2583.20px;width:0;display:flex;justify-content:center;"><span style="display:block;transform:scaleX(1.0416);transform-origin:50% 50%;">17:50</span></div>
<div class="b" style="left:74.80px;top:1896.20px;width:28.10px;height:7.80px;background:#B877D9;border-radius:2px;"></div>
<span class="t" style="top:1887.62px;font-size:23.60px;line-height:23.60px;color:rgb(204,204,220);left:118.56px;transform:scaleX(1.0206);transform-origin:0 50%;">HTTP 100-199</span>
<span class="t" style="top:1887.62px;font-size:23.60px;line-height:23.60px;color:rgb(204,204,220);left:293.46px;transform:scaleX(1.0595);transform-origin:0 50%;">Total: 0</span>
<div class="b" style="left:394.20px;top:1896.20px;width:28.10px;height:7.80px;background:#73BF69;border-radius:2px;"></div>
<span class="t" style="top:1887.62px;font-size:23.60px;line-height:23.60px;color:rgb(204,204,220);left:437.56px;transform:scaleX(1.0238);transform-origin:0 50%;">HTTP 200-299</span>
<span class="t" style="top:1887.62px;font-size:23.60px;line-height:23.60px;color:rgb(204,204,220);left:611.76px;transform:scaleX(1.0583);transform-origin:0 50%;">Total: 13031538</span>
<div class="b" style="left:809.00px;top:1896.20px;width:28.10px;height:7.80px;background:#8AB8FF;border-radius:2px;"></div>
<span class="t" style="top:1887.62px;font-size:23.60px;line-height:23.60px;color:rgb(204,204,220);left:853.46px;transform:scaleX(1.0212);transform-origin:0 50%;">HTTP 300-399</span>
<span class="t" style="top:1887.62px;font-size:23.60px;line-height:23.60px;color:rgb(204,204,220);left:1027.06px;transform:scaleX(1.0648);transform-origin:0 50%;">Total: 0</span>
<div class="b" style="left:1128.20px;top:1896.20px;width:28.10px;height:7.80px;background:#FF9830;border-radius:2px;"></div>
<span class="t" style="top:1887.62px;font-size:23.60px;line-height:23.60px;color:rgb(204,204,220);left:1172.46px;transform:scaleX(1.0212);transform-origin:0 50%;">HTTP 400-499</span>
<span class="t" style="top:1887.62px;font-size:23.60px;line-height:23.60px;color:rgb(204,204,220);left:1346.36px;transform:scaleX(1.0594);transform-origin:0 50%;">Total: 3260152</span>
<div class="b" style="left:1530.00px;top:1896.20px;width:28.10px;height:7.80px;background:#F2495C;border-radius:2px;"></div>
<span class="t" style="top:1887.62px;font-size:23.60px;line-height:23.60px;color:rgb(204,204,220);left:1573.66px;transform:scaleX(1.0238);transform-origin:0 50%;">HTTP 500-599</span>
<span class="t" style="top:1887.62px;font-size:23.60px;line-height:23.60px;color:rgb(204,204,220);left:1747.56px;transform:scaleX(1.0661);transform-origin:0 50%;">Total: 0</span>
<div class="clip" style="top:880px;height:506px">
<div class="b" style="left:51px;top:14.00px;width:6.2px;height:33.80px;background:#E24D42"></div>
<svg class="b" style="left:65.10px;top:22.60px;" width="11.00" height="16.00" viewBox="0 0 11 16"><g fill="none" stroke="rgb(204,204,220)" stroke-width="2.2" stroke-linecap="round" stroke-linejoin="round"><path d="M2 2.2 L8.8 7.9 L2 13.5"/></g></svg>
<span class="t m" style="top:19.92px;font-size:24.50px;line-height:24.50px;color:rgb(204,204,220);left:88.50px;">2022-05-25 16:37:18</span>
<span class="t m" style="top:19.92px;font-size:24.50px;line-height:24.50px;color:rgb(204,204,220);left:384.75px;">[Wed May 25 12:37:18.428169 2022] [mpm_event:error] [pid 1:tid 281473180315664] AH03490: scoreboard is full, not at MaxRequestWorkers.Increase ServerLimit.</span>
<div class="b" style="left:51px;top:54.00px;width:6.2px;height:33.80px;background:#E24D42"></div>
<svg class="b" style="left:65.10px;top:62.60px;" width="11.00" height="16.00" viewBox="0 0 11 16"><g fill="none" stroke="rgb(204,204,220)" stroke-width="2.2" stroke-linecap="round" stroke-linejoin="round"><path d="M2 2.2 L8.8 7.9 L2 13.5"/></g></svg>
<span class="t m" style="top:59.92px;font-size:24.50px;line-height:24.50px;color:rgb(204,204,220);left:88.50px;">2022-05-25 16:12:43</span>
<span class="t m" style="top:59.92px;font-size:24.50px;line-height:24.50px;color:rgb(204,204,220);left:384.75px;">[Wed May 25 12:12:43.129811 2022] [mpm_event:error] [pid 1:tid 281473180315664] AH03490: scoreboard is full, not at MaxRequestWorkers.Increase ServerLimit.</span>
<div class="b" style="left:51px;top:94.10px;width:6.2px;height:67.60px;background:#E24D42"></div>
<svg class="b" style="left:65.10px;top:102.70px;" width="11.00" height="16.00" viewBox="0 0 11 16"><g fill="none" stroke="rgb(204,204,220)" stroke-width="2.2" stroke-linecap="round" stroke-linejoin="round"><path d="M2 2.2 L8.8 7.9 L2 13.5"/></g></svg>
<span class="t m" style="top:100.02px;font-size:24.50px;line-height:24.50px;color:rgb(204,204,220);left:88.50px;">2022-05-25 16:12:27</span>
<span class="t m" style="top:100.02px;font-size:24.50px;line-height:24.50px;color:rgb(204,204,220);left:384.75px;">[Wed May 25 12:12:27.097097 2022] [mpm_event:error] [pid 1:tid 281473180315664] AH00484: server reached MaxRequestWorkers setting, consider raising the MaxReq</span>
<span class="t m" style="top:135.82px;font-size:24.50px;line-height:24.50px;color:rgb(204,204,220);left:384.75px;">uestWorkers setting</span>
<div class="b" style="left:51px;top:168.00px;width:6.2px;height:67.60px;background:#E24D42"></div>
<svg class="b" style="left:65.10px;top:176.60px;" width="11.00" height="16.00" viewBox="0 0 11 16"><g fill="none" stroke="rgb(204,204,220)" stroke-width="2.2" stroke-linecap="round" stroke-linejoin="round"><path d="M2 2.2 L8.8 7.9 L2 13.5"/></g></svg>
<span class="t m" style="top:173.92px;font-size:24.50px;line-height:24.50px;color:rgb(204,204,220);left:88.50px;">2022-05-25 16:12:21</span>
<span class="t m" style="top:173.92px;font-size:24.50px;line-height:24.50px;color:rgb(204,204,220);left:384.75px;">[Wed May 25 12:12:21.089168 2022] [mpm_event:error] [pid 1:tid 281473180315664] AH10159: server is within MinSpareThreads of MaxRequestWorkers, consider raisi</span>
<span class="t m" style="top:209.72px;font-size:24.50px;line-height:24.50px;color:rgb(204,204,220);left:384.75px;">ng the MaxRequestWorkers setting</span>
<div class="b" style="left:51px;top:242.00px;width:6.2px;height:33.80px;background:#7EB26D"></div>
<svg class="b" style="left:65.10px;top:250.60px;" width="11.00" height="16.00" viewBox="0 0 11 16"><g fill="none" stroke="rgb(204,204,220)" stroke-width="2.2" stroke-linecap="round" stroke-linejoin="round"><path d="M2 2.2 L8.8 7.9 L2 13.5"/></g></svg>
<span class="t m" style="top:247.92px;font-size:24.50px;line-height:24.50px;color:rgb(204,204,220);left:88.50px;">2022-05-25 16:08:27</span>
<span class="t m" style="top:247.92px;font-size:24.50px;line-height:24.50px;color:rgb(204,204,220);left:384.75px;">[Wed May 25 12:08:27.284174 2022] [core:notice] [pid 1:tid 281473180315664] AH00094: Command line: 'httpd -D FOREGROUND'</span>
<div class="b" style="left:51px;top:282.00px;width:6.2px;height:33.80px;background:#7EB26D"></div>
<svg class="b" style="left:65.10px;top:290.60px;" width="11.00" height="16.00" viewBox="0 0 11 16"><g fill="none" stroke="rgb(204,204,220)" stroke-width="2.2" stroke-linecap="round" stroke-linejoin="round"><path d="M2 2.2 L8.8 7.9 L2 13.5"/></g></svg>
<span class="t m" style="top:287.92px;font-size:24.50px;line-height:24.50px;color:rgb(204,204,220);left:88.50px;">2022-05-25 16:08:27</span>
<span class="t m" style="top:287.92px;font-size:24.50px;line-height:24.50px;color:rgb(204,204,220);left:384.75px;">[Wed May 25 12:08:27.281360 2022] [mpm_event:notice] [pid 1:tid 281473180315664] AH00489: Apache/2.4.53 (Unix) configured -- resuming normal operations</span>
<div class="b" style="left:51px;top:322.20px;width:6.2px;height:67.60px;background:#8e8e8e"></div>
<svg class="b" style="left:65.10px;top:330.80px;" width="11.00" height="16.00" viewBox="0 0 11 16"><g fill="none" stroke="rgb(204,204,220)" stroke-width="2.2" stroke-linecap="round" stroke-linejoin="round"><path d="M2 2.2 L8.8 7.9 L2 13.5"/></g></svg>
<span class="t m" style="top:328.12px;font-size:24.50px;line-height:24.50px;color:rgb(204,204,220);left:88.50px;">2022-05-25 16:08:27</span>
<span class="t m" style="top:328.12px;font-size:24.50px;line-height:24.50px;color:rgb(204,204,220);left:384.75px;">AH00558: httpd: Could not reliably determine the server's fully qualified domain name, using 10.42.0.92. Set the 'ServerName' directive globally to suppress t</span>
<span class="t m" style="top:363.92px;font-size:24.50px;line-height:24.50px;color:rgb(204,204,220);left:384.75px;">his message</span>
<div class="b" style="left:51px;top:396.40px;width:6.2px;height:67.60px;background:#8e8e8e"></div>
<svg class="b" style="left:65.10px;top:405.00px;" width="11.00" height="16.00" viewBox="0 0 11 16"><g fill="none" stroke="rgb(204,204,220)" stroke-width="2.2" stroke-linecap="round" stroke-linejoin="round"><path d="M2 2.2 L8.8 7.9 L2 13.5"/></g></svg>
<span class="t m" style="top:402.32px;font-size:24.50px;line-height:24.50px;color:rgb(204,204,220);left:88.50px;">2022-05-25 16:08:27</span>
<span class="t m" style="top:402.32px;font-size:24.50px;line-height:24.50px;color:rgb(204,204,220);left:384.75px;">AH00558: httpd: Could not reliably determine the server's fully qualified domain name, using 10.42.0.92. Set the 'ServerName' directive globally to suppress t</span>
<span class="t m" style="top:438.12px;font-size:24.50px;line-height:24.50px;color:rgb(204,204,220);left:384.75px;">his message</span>
<div class="b" style="left:51px;top:470.60px;width:6.2px;height:67.60px;background:#8e8e8e"></div>
<svg class="b" style="left:65.10px;top:479.20px;" width="11.00" height="16.00" viewBox="0 0 11 16"><g fill="none" stroke="rgb(204,204,220)" stroke-width="2.2" stroke-linecap="round" stroke-linejoin="round"><path d="M2 2.2 L8.8 7.9 L2 13.5"/></g></svg>
<span class="t m" style="top:476.52px;font-size:24.50px;line-height:24.50px;color:rgb(204,204,220);left:88.50px;">2022-05-25 16:08:27</span>
<span class="t m" style="top:476.52px;font-size:24.50px;line-height:24.50px;color:rgb(204,204,220);left:384.75px;">AH00558: httpd: Could not reliably determine the server's fully qualified domain name, using 10.42.0.92. Set the 'ServerName' directive globally to suppress t</span>
<span class="t m" style="top:512.32px;font-size:24.50px;line-height:24.50px;color:rgb(204,204,220);left:384.75px;">his message</span>
</div>
<div class="clip" style="top:2020px;height:506px">
<div class="b" style="left:51px;top:18.00px;width:6.2px;height:33.80px;background:#8e8e8e"></div>
<svg class="b" style="left:65.10px;top:26.60px;" width="11.00" height="16.00" viewBox="0 0 11 16"><g fill="none" stroke="rgb(204,204,220)" stroke-width="2.2" stroke-linecap="round" stroke-linejoin="round"><path d="M2 2.2 L8.8 7.9 L2 13.5"/></g></svg>
<span class="t m" style="top:23.92px;font-size:24.50px;line-height:24.50px;color:rgb(204,204,220);left:88.50px;">2022-05-25 17:54:43</span>
<span class="t m" style="top:23.92px;font-size:24.50px;line-height:24.50px;color:rgb(204,204,220);left:384.75px;">::1 - - [25/May/2022:13:54:43 +0000] "GET /server-status/?auto HTTP/1.1" 200 1210</span>
<div class="b" style="left:51px;top:58.03px;width:6.2px;height:33.80px;background:#8e8e8e"></div>
<svg class="b" style="left:65.10px;top:66.63px;" width="11.00" height="16.00" viewBox="0 0 11 16"><g fill="none" stroke="rgb(204,204,220)" stroke-width="2.2" stroke-linecap="round" stroke-linejoin="round"><path d="M2 2.2 L8.8 7.9 L2 13.5"/></g></svg>
<span class="t m" style="top:63.95px;font-size:24.50px;line-height:24.50px;color:rgb(204,204,220);left:88.50px;">2022-05-25 17:54:28</span>
<span class="t m" style="top:63.95px;font-size:24.50px;line-height:24.50px;color:rgb(204,204,220);left:384.75px;">::1 - - [25/May/2022:13:54:28 +0000] "GET /server-status/?auto HTTP/1.1" 200 1208</span>
<div class="b" style="left:51px;top:98.06px;width:6.2px;height:33.80px;background:#8e8e8e"></div>
<svg class="b" style="left:65.10px;top:106.66px;" width="11.00" height="16.00" viewBox="0 0 11 16"><g fill="none" stroke="rgb(204,204,220)" stroke-width="2.2" stroke-linecap="round" stroke-linejoin="round"><path d="M2 2.2 L8.8 7.9 L2 13.5"/></g></svg>
<span class="t m" style="top:103.98px;font-size:24.50px;line-height:24.50px;color:rgb(204,204,220);left:88.50px;">2022-05-25 17:54:13</span>
<span class="t m" style="top:103.98px;font-size:24.50px;line-height:24.50px;color:rgb(204,204,220);left:384.75px;">::1 - - [25/May/2022:13:54:13 +0000] "GET /server-status/?auto HTTP/1.1" 200 1210</span>
<div class="b" style="left:51px;top:138.09px;width:6.2px;height:33.80px;background:#8e8e8e"></div>
<svg class="b" style="left:65.10px;top:146.69px;" width="11.00" height="16.00" viewBox="0 0 11 16"><g fill="none" stroke="rgb(204,204,220)" stroke-width="2.2" stroke-linecap="round" stroke-linejoin="round"><path d="M2 2.2 L8.8 7.9 L2 13.5"/></g></svg>
<span class="t m" style="top:144.01px;font-size:24.50px;line-height:24.50px;color:rgb(204,204,220);left:88.50px;">2022-05-25 17:53:58</span>
<span class="t m" style="top:144.01px;font-size:24.50px;line-height:24.50px;color:rgb(204,204,220);left:384.75px;">::1 - - [25/May/2022:13:53:58 +0000] "GET /server-status/?auto HTTP/1.1" 200 1211</span>
<div class="b" style="left:51px;top:178.12px;width:6.2px;height:33.80px;background:#8e8e8e"></div>
<svg class="b" style="left:65.10px;top:186.72px;" width="11.00" height="16.00" viewBox="0 0 11 16"><g fill="none" stroke="rgb(204,204,220)" stroke-width="2.2" stroke-linecap="round" stroke-linejoin="round"><path d="M2 2.2 L8.8 7.9 L2 13.5"/></g></svg>
<span class="t m" style="top:184.04px;font-size:24.50px;line-height:24.50px;color:rgb(204,204,220);left:88.50px;">2022-05-25 17:53:43</span>
<span class="t m" style="top:184.04px;font-size:24.50px;line-height:24.50px;color:rgb(204,204,220);left:384.75px;">::1 - - [25/May/2022:13:53:43 +0000] "GET /server-status/?auto HTTP/1.1" 200 1211</span>
<div class="b" style="left:51px;top:218.15px;width:6.2px;height:33.80px;background:#8e8e8e"></div>
<svg class="b" style="left:65.10px;top:226.75px;" width="11.00" height="16.00" viewBox="0 0 11 16"><g fill="none" stroke="rgb(204,204,220)" stroke-width="2.2" stroke-linecap="round" stroke-linejoin="round"><path d="M2 2.2 L8.8 7.9 L2 13.5"/></g></svg>
<span class="t m" style="top:224.07px;font-size:24.50px;line-height:24.50px;color:rgb(204,204,220);left:88.50px;">2022-05-25 17:53:28</span>
<span class="t m" style="top:224.07px;font-size:24.50px;line-height:24.50px;color:rgb(204,204,220);left:384.75px;">::1 - - [25/May/2022:13:53:28 +0000] "GET /server-status/?auto HTTP/1.1" 200 1209</span>
<div class="b" style="left:51px;top:258.18px;width:6.2px;height:33.80px;background:#8e8e8e"></div>
<svg class="b" style="left:65.10px;top:266.78px;" width="11.00" height="16.00" viewBox="0 0 11 16"><g fill="none" stroke="rgb(204,204,220)" stroke-width="2.2" stroke-linecap="round" stroke-linejoin="round"><path d="M2 2.2 L8.8 7.9 L2 13.5"/></g></svg>
<span class="t m" style="top:264.10px;font-size:24.50px;line-height:24.50px;color:rgb(204,204,220);left:88.50px;">2022-05-25 17:53:13</span>
<span class="t m" style="top:264.10px;font-size:24.50px;line-height:24.50px;color:rgb(204,204,220);left:384.75px;">::1 - - [25/May/2022:13:53:13 +0000] "GET /server-status/?auto HTTP/1.1" 200 1213</span>
<div class="b" style="left:51px;top:298.21px;width:6.2px;height:33.80px;background:#8e8e8e"></div>
<svg class="b" style="left:65.10px;top:306.81px;" width="11.00" height="16.00" viewBox="0 0 11 16"><g fill="none" stroke="rgb(204,204,220)" stroke-width="2.2" stroke-linecap="round" stroke-linejoin="round"><path d="M2 2.2 L8.8 7.9 L2 13.5"/></g></svg>
<span class="t m" style="top:304.13px;font-size:24.50px;line-height:24.50px;color:rgb(204,204,220);left:88.50px;">2022-05-25 17:53:07</span>
<span class="t m" style="top:304.13px;font-size:24.50px;line-height:24.50px;color:rgb(204,204,220);left:384.75px;">10.42.0.113 - - [25/May/2022:13:53:07 +0000] "GET /idhrwaqb HTTP/1.1" 404 196</span>
<div class="b" style="left:51px;top:338.24px;width:6.2px;height:33.80px;background:#8e8e8e"></div>
<svg class="b" style="left:65.10px;top:346.84px;" width="11.00" height="16.00" viewBox="0 0 11 16"><g fill="none" stroke="rgb(204,204,220)" stroke-width="2.2" stroke-linecap="round" stroke-linejoin="round"><path d="M2 2.2 L8.8 7.9 L2 13.5"/></g></svg>
<span class="t m" style="top:344.16px;font-size:24.50px;line-height:24.50px;color:rgb(204,204,220);left:88.50px;">2022-05-25 17:53:07</span>
<span class="t m" style="top:344.16px;font-size:24.50px;line-height:24.50px;color:rgb(204,204,220);left:384.75px;">10.42.0.113 - - [25/May/2022:13:53:07 +0000] "POST / HTTP/1.1" 200 45</span>
<div class="b" style="left:51px;top:378.27px;width:6.2px;height:33.80px;background:#8e8e8e"></div>
<svg class="b" style="left:65.10px;top:386.87px;" width="11.00" height="16.00" viewBox="0 0 11 16"><g fill="none" stroke="rgb(204,204,220)" stroke-width="2.2" stroke-linecap="round" stroke-linejoin="round"><path d="M2 2.2 L8.8 7.9 L2 13.5"/></g></svg>
<span class="t m" style="top:384.19px;font-size:24.50px;line-height:24.50px;color:rgb(204,204,220);left:88.50px;">2022-05-25 17:53:07</span>
<span class="t m" style="top:384.19px;font-size:24.50px;line-height:24.50px;color:rgb(204,204,220);left:384.75px;">10.42.0.113 - - [25/May/2022:13:53:07 +0000] "GET / HTTP/1.1" 200 45</span>
<div class="b" style="left:51px;top:418.30px;width:6.2px;height:33.80px;background:#8e8e8e"></div>
<svg class="b" style="left:65.10px;top:426.90px;" width="11.00" height="16.00" viewBox="0 0 11 16"><g fill="none" stroke="rgb(204,204,220)" stroke-width="2.2" stroke-linecap="round" stroke-linejoin="round"><path d="M2 2.2 L8.8 7.9 L2 13.5"/></g></svg>
<span class="t m" style="top:424.22px;font-size:24.50px;line-height:24.50px;color:rgb(204,204,220);left:88.50px;">2022-05-25 17:53:07</span>
<span class="t m" style="top:424.22px;font-size:24.50px;line-height:24.50px;color:rgb(204,204,220);left:384.75px;">10.42.0.113 - - [25/May/2022:13:53:07 +0000] "GET / HTTP/1.1" 200 45</span>
<div class="b" style="left:51px;top:458.33px;width:6.2px;height:33.80px;background:#8e8e8e"></div>
<svg class="b" style="left:65.10px;top:466.93px;" width="11.00" height="16.00" viewBox="0 0 11 16"><g fill="none" stroke="rgb(204,204,220)" stroke-width="2.2" stroke-linecap="round" stroke-linejoin="round"><path d="M2 2.2 L8.8 7.9 L2 13.5"/></g></svg>
<span class="t m" style="top:464.25px;font-size:24.50px;line-height:24.50px;color:rgb(204,204,220);left:88.50px;">2022-05-25 17:53:07</span>
<span class="t m" style="top:464.25px;font-size:24.50px;line-height:24.50px;color:rgb(204,204,220);left:384.75px;">10.42.0.113 - - [25/May/2022:13:53:07 +0000] "GET / HTTP/1.1" 200 45</span>
<div class="b" style="left:51px;top:498.36px;width:6.2px;height:33.80px;background:#8e8e8e"></div>
<svg class="b" style="left:65.10px;top:506.96px;" width="11.00" height="16.00" viewBox="0 0 11 16"><g fill="none" stroke="rgb(204,204,220)" stroke-width="2.2" stroke-linecap="round" stroke-linejoin="round"><path d="M2 2.2 L8.8 7.9 L2 13.5"/></g></svg>
<span class="t m" style="top:504.28px;font-size:24.50px;line-height:24.50px;color:rgb(204,204,220);left:88.50px;">2022-05-25 17:53:07</span>
<span class="t m" style="top:504.28px;font-size:24.50px;line-height:24.50px;color:rgb(204,204,220);left:384.75px;">10.42.0.113 - - [25/May/2022:13:53:07 +0000] "GET /fkjvefcq HTTP/1.1" 404 196</span>
</div>
</div>
</body></html>
